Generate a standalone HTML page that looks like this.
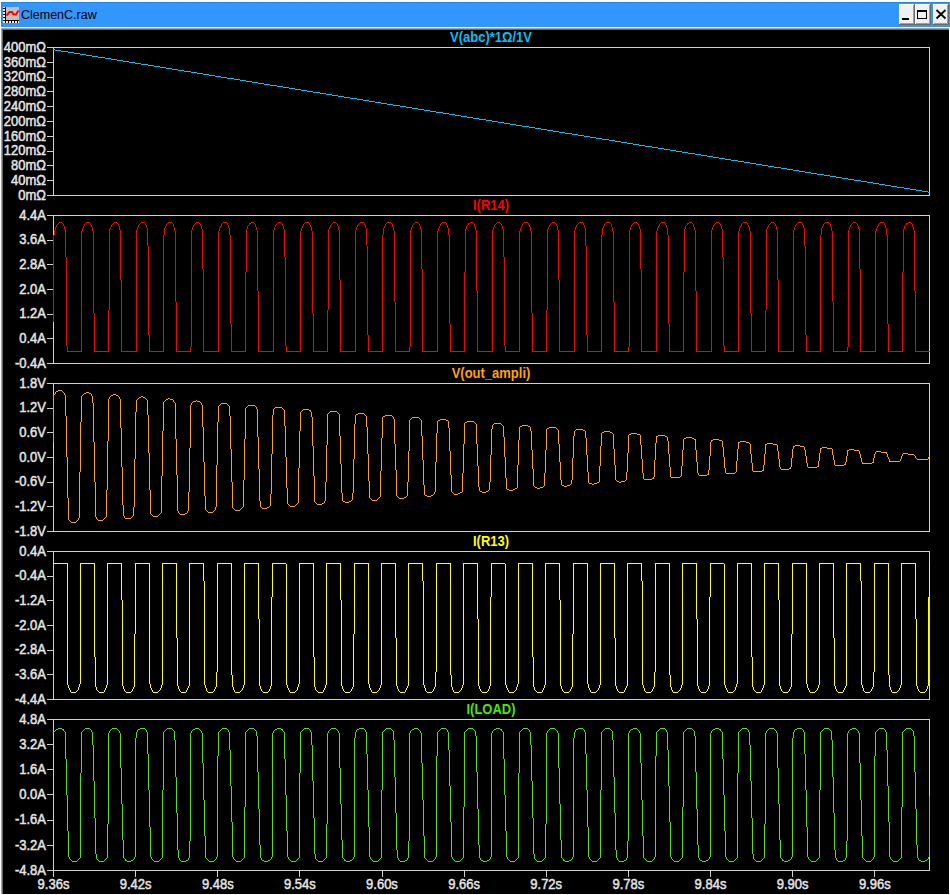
<!DOCTYPE html>
<html><head><meta charset="utf-8"><title>ClemenC.raw</title>
<style>
html,body{margin:0;padding:0;background:#fff;width:950px;height:895px;overflow:hidden;}
.lb{font-family:"Liberation Sans",sans-serif;font-weight:normal;font-size:13px;fill:#e4e4e4;stroke:#e4e4e4;stroke-width:0.45px;}
.tt{font-family:"Liberation Sans",sans-serif;font-weight:bold;font-size:13px;}
</style></head><body>
<svg width="950" height="895" viewBox="0 0 950 895" style="position:absolute;left:0;top:0"><rect x="0" y="0" width="950" height="895" fill="#ffffff"/><rect x="1" y="2" width="949" height="25" fill="#3396fa"/><rect x="1" y="2" width="949" height="1" fill="#1f88f0"/><rect x="1" y="2" width="1" height="25" fill="#1f88f0"/><rect x="1" y="28" width="948" height="866" fill="#a0a0a0"/><rect x="2" y="29" width="947" height="865" fill="#696969"/><rect x="3" y="30" width="946" height="864" fill="#000000"/><rect x="6" y="7" width="13" height="13" fill="#c0c0c0"/><rect x="3" y="7" width="3" height="16" fill="#000"/><rect x="3" y="20" width="16" height="3" fill="#000"/><rect x="3" y="7" width="2" height="1" fill="#f4ede4"/><rect x="3" y="9" width="2" height="2" fill="#f4ede4"/><rect x="3" y="12" width="2" height="2" fill="#f4ede4"/><rect x="3" y="15" width="2" height="2" fill="#f4ede4"/><rect x="3" y="18" width="2" height="2" fill="#f4ede4"/><rect x="3" y="21" width="2" height="2" fill="#f4ede4"/><rect x="6" y="21" width="2" height="2" fill="#f4ede4"/><rect x="9" y="21" width="2" height="2" fill="#f4ede4"/><rect x="12" y="21" width="2" height="2" fill="#f4ede4"/><rect x="15" y="21" width="2" height="2" fill="#f4ede4"/><rect x="18" y="21" width="1" height="2" fill="#f4ede4"/><path d="M6.5 15.5 L9.5 12 L12 12 L13.5 14.5 L16 14.5 L18.5 10.5" stroke="#ff0000" stroke-width="2" fill="none"/><text x="21" y="19" font-family="Liberation Sans" font-size="12.5" fill="#000">ClemenC.raw</text><rect x="899" y="4" width="16" height="21" fill="#696969"/><rect x="899" y="4" width="15" height="20" fill="#ffffff"/><rect x="900" y="5" width="14" height="19" fill="#a0a0a0"/><rect x="900" y="5" width="13" height="18" fill="#f0f0f0"/><rect x="915" y="4" width="16" height="21" fill="#696969"/><rect x="915" y="4" width="15" height="20" fill="#ffffff"/><rect x="916" y="5" width="14" height="19" fill="#a0a0a0"/><rect x="916" y="5" width="13" height="18" fill="#f0f0f0"/><rect x="933" y="4" width="16" height="21" fill="#696969"/><rect x="933" y="4" width="15" height="20" fill="#ffffff"/><rect x="934" y="5" width="14" height="19" fill="#a0a0a0"/><rect x="934" y="5" width="13" height="18" fill="#f0f0f0"/><rect x="902" y="18" width="7" height="2" fill="#000"/><rect x="917" y="10" width="10" height="9" fill="#000"/><rect x="918" y="12" width="8" height="6" fill="#f0f0f0"/><path d="M936.5 10 L945.5 18.5 M945.5 10 L936.5 18.5" stroke="#000" stroke-width="1.8" fill="none"/><rect x="53" y="47" width="877" height="1" fill="#d0d0d0"/><rect x="53" y="195" width="877" height="1" fill="#d0d0d0"/><rect x="53" y="47" width="1" height="149" fill="#d0d0d0"/><rect x="929" y="47" width="1" height="149" fill="#d0d0d0"/><rect x="47" y="47" width="6" height="1" fill="#d0d0d0"/><text x="46" y="47.09" transform="scale(1,1.1)" text-anchor="end" class="lb">400mΩ</text><rect x="47" y="62" width="6" height="1" fill="#d0d0d0"/><text x="46" y="60.55" transform="scale(1,1.1)" text-anchor="end" class="lb">360mΩ</text><rect x="47" y="77" width="6" height="1" fill="#d0d0d0"/><text x="46" y="74.00" transform="scale(1,1.1)" text-anchor="end" class="lb">320mΩ</text><rect x="47" y="91" width="6" height="1" fill="#d0d0d0"/><text x="46" y="87.45" transform="scale(1,1.1)" text-anchor="end" class="lb">280mΩ</text><rect x="47" y="106" width="6" height="1" fill="#d0d0d0"/><text x="46" y="100.91" transform="scale(1,1.1)" text-anchor="end" class="lb">240mΩ</text><rect x="47" y="121" width="6" height="1" fill="#d0d0d0"/><text x="46" y="114.36" transform="scale(1,1.1)" text-anchor="end" class="lb">200mΩ</text><rect x="47" y="136" width="6" height="1" fill="#d0d0d0"/><text x="46" y="127.82" transform="scale(1,1.1)" text-anchor="end" class="lb">160mΩ</text><rect x="47" y="151" width="6" height="1" fill="#d0d0d0"/><text x="46" y="141.27" transform="scale(1,1.1)" text-anchor="end" class="lb">120mΩ</text><rect x="47" y="165" width="6" height="1" fill="#d0d0d0"/><text x="46" y="154.73" transform="scale(1,1.1)" text-anchor="end" class="lb">80mΩ</text><rect x="47" y="180" width="6" height="1" fill="#d0d0d0"/><text x="46" y="168.18" transform="scale(1,1.1)" text-anchor="end" class="lb">40mΩ</text><rect x="47" y="195" width="6" height="1" fill="#d0d0d0"/><text x="46" y="181.64" transform="scale(1,1.1)" text-anchor="end" class="lb">0mΩ</text><text x="491" y="38.18" transform="scale(1,1.1)" text-anchor="middle" class="tt" style="fill:#00c0f8">V(abc)*1Ω/1V</text><rect x="53" y="215" width="877" height="1" fill="#d0d0d0"/><rect x="53" y="363" width="877" height="1" fill="#d0d0d0"/><rect x="53" y="215" width="1" height="149" fill="#d0d0d0"/><rect x="929" y="215" width="1" height="149" fill="#d0d0d0"/><rect x="47" y="215" width="6" height="1" fill="#d0d0d0"/><text x="46" y="199.82" transform="scale(1,1.1)" text-anchor="end" class="lb">4.4A</text><rect x="47" y="240" width="6" height="1" fill="#d0d0d0"/><text x="46" y="222.24" transform="scale(1,1.1)" text-anchor="end" class="lb">3.6A</text><rect x="47" y="264" width="6" height="1" fill="#d0d0d0"/><text x="46" y="244.67" transform="scale(1,1.1)" text-anchor="end" class="lb">2.8A</text><rect x="47" y="289" width="6" height="1" fill="#d0d0d0"/><text x="46" y="267.09" transform="scale(1,1.1)" text-anchor="end" class="lb">2.0A</text><rect x="47" y="314" width="6" height="1" fill="#d0d0d0"/><text x="46" y="289.52" transform="scale(1,1.1)" text-anchor="end" class="lb">1.2A</text><rect x="47" y="338" width="6" height="1" fill="#d0d0d0"/><text x="46" y="311.94" transform="scale(1,1.1)" text-anchor="end" class="lb">0.4A</text><rect x="47" y="363" width="6" height="1" fill="#d0d0d0"/><text x="46" y="334.36" transform="scale(1,1.1)" text-anchor="end" class="lb">-0.4A</text><text x="491" y="190.91" transform="scale(1,1.1)" text-anchor="middle" class="tt" style="fill:#ff0000">I(R14)</text><rect x="53" y="383" width="877" height="1" fill="#d0d0d0"/><rect x="53" y="531" width="877" height="1" fill="#d0d0d0"/><rect x="53" y="383" width="1" height="149" fill="#d0d0d0"/><rect x="929" y="383" width="1" height="149" fill="#d0d0d0"/><rect x="47" y="383" width="6" height="1" fill="#d0d0d0"/><text x="46" y="352.55" transform="scale(1,1.1)" text-anchor="end" class="lb">1.8V</text><rect x="47" y="408" width="6" height="1" fill="#d0d0d0"/><text x="46" y="374.97" transform="scale(1,1.1)" text-anchor="end" class="lb">1.2V</text><rect x="47" y="432" width="6" height="1" fill="#d0d0d0"/><text x="46" y="397.39" transform="scale(1,1.1)" text-anchor="end" class="lb">0.6V</text><rect x="47" y="457" width="6" height="1" fill="#d0d0d0"/><text x="46" y="419.82" transform="scale(1,1.1)" text-anchor="end" class="lb">0.0V</text><rect x="47" y="482" width="6" height="1" fill="#d0d0d0"/><text x="46" y="442.24" transform="scale(1,1.1)" text-anchor="end" class="lb">-0.6V</text><rect x="47" y="506" width="6" height="1" fill="#d0d0d0"/><text x="46" y="464.67" transform="scale(1,1.1)" text-anchor="end" class="lb">-1.2V</text><rect x="47" y="531" width="6" height="1" fill="#d0d0d0"/><text x="46" y="487.09" transform="scale(1,1.1)" text-anchor="end" class="lb">-1.8V</text><text x="491" y="343.64" transform="scale(1,1.1)" text-anchor="middle" class="tt" style="fill:#ffa500">V(out_ampli)</text><rect x="53" y="551" width="877" height="1" fill="#d0d0d0"/><rect x="53" y="699" width="877" height="1" fill="#d0d0d0"/><rect x="53" y="551" width="1" height="149" fill="#d0d0d0"/><rect x="929" y="551" width="1" height="149" fill="#d0d0d0"/><rect x="47" y="551" width="6" height="1" fill="#d0d0d0"/><text x="46" y="505.27" transform="scale(1,1.1)" text-anchor="end" class="lb">0.4A</text><rect x="47" y="576" width="6" height="1" fill="#d0d0d0"/><text x="46" y="527.70" transform="scale(1,1.1)" text-anchor="end" class="lb">-0.4A</text><rect x="47" y="600" width="6" height="1" fill="#d0d0d0"/><text x="46" y="550.12" transform="scale(1,1.1)" text-anchor="end" class="lb">-1.2A</text><rect x="47" y="625" width="6" height="1" fill="#d0d0d0"/><text x="46" y="572.55" transform="scale(1,1.1)" text-anchor="end" class="lb">-2.0A</text><rect x="47" y="650" width="6" height="1" fill="#d0d0d0"/><text x="46" y="594.97" transform="scale(1,1.1)" text-anchor="end" class="lb">-2.8A</text><rect x="47" y="674" width="6" height="1" fill="#d0d0d0"/><text x="46" y="617.39" transform="scale(1,1.1)" text-anchor="end" class="lb">-3.6A</text><rect x="47" y="699" width="6" height="1" fill="#d0d0d0"/><text x="46" y="639.82" transform="scale(1,1.1)" text-anchor="end" class="lb">-4.4A</text><text x="491" y="496.36" transform="scale(1,1.1)" text-anchor="middle" class="tt" style="fill:#ffff00">I(R13)</text><rect x="53" y="719" width="877" height="1" fill="#d0d0d0"/><rect x="53" y="870" width="877" height="1" fill="#d0d0d0"/><rect x="53" y="719" width="1" height="152" fill="#d0d0d0"/><rect x="929" y="719" width="1" height="152" fill="#d0d0d0"/><rect x="47" y="719" width="6" height="1" fill="#d0d0d0"/><text x="46" y="658.00" transform="scale(1,1.1)" text-anchor="end" class="lb">4.8A</text><rect x="47" y="744" width="6" height="1" fill="#d0d0d0"/><text x="46" y="680.88" transform="scale(1,1.1)" text-anchor="end" class="lb">3.2A</text><rect x="47" y="769" width="6" height="1" fill="#d0d0d0"/><text x="46" y="703.76" transform="scale(1,1.1)" text-anchor="end" class="lb">1.6A</text><rect x="47" y="794" width="6" height="1" fill="#d0d0d0"/><text x="46" y="726.64" transform="scale(1,1.1)" text-anchor="end" class="lb">0.0A</text><rect x="47" y="820" width="6" height="1" fill="#d0d0d0"/><text x="46" y="749.52" transform="scale(1,1.1)" text-anchor="end" class="lb">-1.6A</text><rect x="47" y="845" width="6" height="1" fill="#d0d0d0"/><text x="46" y="772.39" transform="scale(1,1.1)" text-anchor="end" class="lb">-3.2A</text><rect x="47" y="870" width="6" height="1" fill="#d0d0d0"/><text x="46" y="795.27" transform="scale(1,1.1)" text-anchor="end" class="lb">-4.8A</text><text x="491" y="649.09" transform="scale(1,1.1)" text-anchor="middle" class="tt" style="fill:#4ee600">I(LOAD)</text><rect x="53" y="871" width="1" height="6" fill="#d0d0d0"/><text x="53.5" y="808.18" transform="scale(1,1.1)" text-anchor="middle" class="lb">9.36s</text><rect x="135" y="871" width="1" height="6" fill="#d0d0d0"/><text x="135.6" y="808.18" transform="scale(1,1.1)" text-anchor="middle" class="lb">9.42s</text><rect x="217" y="871" width="1" height="6" fill="#d0d0d0"/><text x="217.8" y="808.18" transform="scale(1,1.1)" text-anchor="middle" class="lb">9.48s</text><rect x="299" y="871" width="1" height="6" fill="#d0d0d0"/><text x="299.9" y="808.18" transform="scale(1,1.1)" text-anchor="middle" class="lb">9.54s</text><rect x="382" y="871" width="1" height="6" fill="#d0d0d0"/><text x="382.0" y="808.18" transform="scale(1,1.1)" text-anchor="middle" class="lb">9.60s</text><rect x="464" y="871" width="1" height="6" fill="#d0d0d0"/><text x="464.1" y="808.18" transform="scale(1,1.1)" text-anchor="middle" class="lb">9.66s</text><rect x="546" y="871" width="1" height="6" fill="#d0d0d0"/><text x="546.2" y="808.18" transform="scale(1,1.1)" text-anchor="middle" class="lb">9.72s</text><rect x="628" y="871" width="1" height="6" fill="#d0d0d0"/><text x="628.4" y="808.18" transform="scale(1,1.1)" text-anchor="middle" class="lb">9.78s</text><rect x="710" y="871" width="1" height="6" fill="#d0d0d0"/><text x="710.5" y="808.18" transform="scale(1,1.1)" text-anchor="middle" class="lb">9.84s</text><rect x="792" y="871" width="1" height="6" fill="#d0d0d0"/><text x="792.6" y="808.18" transform="scale(1,1.1)" text-anchor="middle" class="lb">9.90s</text><rect x="874" y="871" width="1" height="6" fill="#d0d0d0"/><text x="874.8" y="808.18" transform="scale(1,1.1)" text-anchor="middle" class="lb">9.96s</text><path d="M53 49h1v1h-1zM54 49h1v1h-1zM55 50h1v1h-1zM56 50h1v1h-1zM57 50h1v1h-1zM58 50h1v1h-1zM59 50h1v1h-1zM60 50h1v1h-1zM61 51h1v1h-1zM62 51h1v1h-1zM63 51h1v1h-1zM64 51h1v1h-1zM65 51h1v1h-1zM66 51h1v1h-1zM67 51h1v1h-1zM68 52h1v1h-1zM69 52h1v1h-1zM70 52h1v1h-1zM71 52h1v1h-1zM72 52h1v1h-1zM73 52h1v1h-1zM74 53h1v1h-1zM75 53h1v1h-1zM76 53h1v1h-1zM77 53h1v1h-1zM78 53h1v1h-1zM79 53h1v1h-1zM80 54h1v1h-1zM81 54h1v1h-1zM82 54h1v1h-1zM83 54h1v1h-1zM84 54h1v1h-1zM85 54h1v1h-1zM86 55h1v1h-1zM87 55h1v1h-1zM88 55h1v1h-1zM89 55h1v1h-1zM90 55h1v1h-1zM91 55h1v1h-1zM92 56h1v1h-1zM93 56h1v1h-1zM94 56h1v1h-1zM95 56h1v1h-1zM96 56h1v1h-1zM97 56h1v1h-1zM98 57h1v1h-1zM99 57h1v1h-1zM100 57h1v1h-1zM101 57h1v1h-1zM102 57h1v1h-1zM103 57h1v1h-1zM104 57h1v1h-1zM105 58h1v1h-1zM106 58h1v1h-1zM107 58h1v1h-1zM108 58h1v1h-1zM109 58h1v1h-1zM110 58h1v1h-1zM111 59h1v1h-1zM112 59h1v1h-1zM113 59h1v1h-1zM114 59h1v1h-1zM115 59h1v1h-1zM116 59h1v1h-1zM117 60h1v1h-1zM118 60h1v1h-1zM119 60h1v1h-1zM120 60h1v1h-1zM121 60h1v1h-1zM122 60h1v1h-1zM123 61h1v1h-1zM124 61h1v1h-1zM125 61h1v1h-1zM126 61h1v1h-1zM127 61h1v1h-1zM128 61h1v1h-1zM129 62h1v1h-1zM130 62h1v1h-1zM131 62h1v1h-1zM132 62h1v1h-1zM133 62h1v1h-1zM134 62h1v1h-1zM135 63h1v1h-1zM136 63h1v1h-1zM137 63h1v1h-1zM138 63h1v1h-1zM139 63h1v1h-1zM140 63h1v1h-1zM141 64h1v1h-1zM142 64h1v1h-1zM143 64h1v1h-1zM144 64h1v1h-1zM145 64h1v1h-1zM146 64h1v1h-1zM147 64h1v1h-1zM148 65h1v1h-1zM149 65h1v1h-1zM150 65h1v1h-1zM151 65h1v1h-1zM152 65h1v1h-1zM153 65h1v1h-1zM154 66h1v1h-1zM155 66h1v1h-1zM156 66h1v1h-1zM157 66h1v1h-1zM158 66h1v1h-1zM159 66h1v1h-1zM160 67h1v1h-1zM161 67h1v1h-1zM162 67h1v1h-1zM163 67h1v1h-1zM164 67h1v1h-1zM165 67h1v1h-1zM166 68h1v1h-1zM167 68h1v1h-1zM168 68h1v1h-1zM169 68h1v1h-1zM170 68h1v1h-1zM171 68h1v1h-1zM172 69h1v1h-1zM173 69h1v1h-1zM174 69h1v1h-1zM175 69h1v1h-1zM176 69h1v1h-1zM177 69h1v1h-1zM178 70h1v1h-1zM179 70h1v1h-1zM180 70h1v1h-1zM181 70h1v1h-1zM182 70h1v1h-1zM183 70h1v1h-1zM184 71h1v1h-1zM185 71h1v1h-1zM186 71h1v1h-1zM187 71h1v1h-1zM188 71h1v1h-1zM189 71h1v1h-1zM190 71h1v1h-1zM191 72h1v1h-1zM192 72h1v1h-1zM193 72h1v1h-1zM194 72h1v1h-1zM195 72h1v1h-1zM196 72h1v1h-1zM197 73h1v1h-1zM198 73h1v1h-1zM199 73h1v1h-1zM200 73h1v1h-1zM201 73h1v1h-1zM202 73h1v1h-1zM203 74h1v1h-1zM204 74h1v1h-1zM205 74h1v1h-1zM206 74h1v1h-1zM207 74h1v1h-1zM208 74h1v1h-1zM209 75h1v1h-1zM210 75h1v1h-1zM211 75h1v1h-1zM212 75h1v1h-1zM213 75h1v1h-1zM214 75h1v1h-1zM215 76h1v1h-1zM216 76h1v1h-1zM217 76h1v1h-1zM218 76h1v1h-1zM219 76h1v1h-1zM220 76h1v1h-1zM221 77h1v1h-1zM222 77h1v1h-1zM223 77h1v1h-1zM224 77h1v1h-1zM225 77h1v1h-1zM226 77h1v1h-1zM227 78h1v1h-1zM228 78h1v1h-1zM229 78h1v1h-1zM230 78h1v1h-1zM231 78h1v1h-1zM232 78h1v1h-1zM233 78h1v1h-1zM234 79h1v1h-1zM235 79h1v1h-1zM236 79h1v1h-1zM237 79h1v1h-1zM238 79h1v1h-1zM239 79h1v1h-1zM240 80h1v1h-1zM241 80h1v1h-1zM242 80h1v1h-1zM243 80h1v1h-1zM244 80h1v1h-1zM245 80h1v1h-1zM246 81h1v1h-1zM247 81h1v1h-1zM248 81h1v1h-1zM249 81h1v1h-1zM250 81h1v1h-1zM251 81h1v1h-1zM252 82h1v1h-1zM253 82h1v1h-1zM254 82h1v1h-1zM255 82h1v1h-1zM256 82h1v1h-1zM257 82h1v1h-1zM258 83h1v1h-1zM259 83h1v1h-1zM260 83h1v1h-1zM261 83h1v1h-1zM262 83h1v1h-1zM263 83h1v1h-1zM264 84h1v1h-1zM265 84h1v1h-1zM266 84h1v1h-1zM267 84h1v1h-1zM268 84h1v1h-1zM269 84h1v1h-1zM270 85h1v1h-1zM271 85h1v1h-1zM272 85h1v1h-1zM273 85h1v1h-1zM274 85h1v1h-1zM275 85h1v1h-1zM276 85h1v1h-1zM277 86h1v1h-1zM278 86h1v1h-1zM279 86h1v1h-1zM280 86h1v1h-1zM281 86h1v1h-1zM282 86h1v1h-1zM283 87h1v1h-1zM284 87h1v1h-1zM285 87h1v1h-1zM286 87h1v1h-1zM287 87h1v1h-1zM288 87h1v1h-1zM289 88h1v1h-1zM290 88h1v1h-1zM291 88h1v1h-1zM292 88h1v1h-1zM293 88h1v1h-1zM294 88h1v1h-1zM295 89h1v1h-1zM296 89h1v1h-1zM297 89h1v1h-1zM298 89h1v1h-1zM299 89h1v1h-1zM300 89h1v1h-1zM301 90h1v1h-1zM302 90h1v1h-1zM303 90h1v1h-1zM304 90h1v1h-1zM305 90h1v1h-1zM306 90h1v1h-1zM307 91h1v1h-1zM308 91h1v1h-1zM309 91h1v1h-1zM310 91h1v1h-1zM311 91h1v1h-1zM312 91h1v1h-1zM313 92h1v1h-1zM314 92h1v1h-1zM315 92h1v1h-1zM316 92h1v1h-1zM317 92h1v1h-1zM318 92h1v1h-1zM319 92h1v1h-1zM320 93h1v1h-1zM321 93h1v1h-1zM322 93h1v1h-1zM323 93h1v1h-1zM324 93h1v1h-1zM325 93h1v1h-1zM326 94h1v1h-1zM327 94h1v1h-1zM328 94h1v1h-1zM329 94h1v1h-1zM330 94h1v1h-1zM331 94h1v1h-1zM332 95h1v1h-1zM333 95h1v1h-1zM334 95h1v1h-1zM335 95h1v1h-1zM336 95h1v1h-1zM337 95h1v1h-1zM338 96h1v1h-1zM339 96h1v1h-1zM340 96h1v1h-1zM341 96h1v1h-1zM342 96h1v1h-1zM343 96h1v1h-1zM344 97h1v1h-1zM345 97h1v1h-1zM346 97h1v1h-1zM347 97h1v1h-1zM348 97h1v1h-1zM349 97h1v1h-1zM350 98h1v1h-1zM351 98h1v1h-1zM352 98h1v1h-1zM353 98h1v1h-1zM354 98h1v1h-1zM355 98h1v1h-1zM356 98h1v1h-1zM357 99h1v1h-1zM358 99h1v1h-1zM359 99h1v1h-1zM360 99h1v1h-1zM361 99h1v1h-1zM362 99h1v1h-1zM363 100h1v1h-1zM364 100h1v1h-1zM365 100h1v1h-1zM366 100h1v1h-1zM367 100h1v1h-1zM368 100h1v1h-1zM369 101h1v1h-1zM370 101h1v1h-1zM371 101h1v1h-1zM372 101h1v1h-1zM373 101h1v1h-1zM374 101h1v1h-1zM375 102h1v1h-1zM376 102h1v1h-1zM377 102h1v1h-1zM378 102h1v1h-1zM379 102h1v1h-1zM380 102h1v1h-1zM381 103h1v1h-1zM382 103h1v1h-1zM383 103h1v1h-1zM384 103h1v1h-1zM385 103h1v1h-1zM386 103h1v1h-1zM387 104h1v1h-1zM388 104h1v1h-1zM389 104h1v1h-1zM390 104h1v1h-1zM391 104h1v1h-1zM392 104h1v1h-1zM393 105h1v1h-1zM394 105h1v1h-1zM395 105h1v1h-1zM396 105h1v1h-1zM397 105h1v1h-1zM398 105h1v1h-1zM399 105h1v1h-1zM400 106h1v1h-1zM401 106h1v1h-1zM402 106h1v1h-1zM403 106h1v1h-1zM404 106h1v1h-1zM405 106h1v1h-1zM406 107h1v1h-1zM407 107h1v1h-1zM408 107h1v1h-1zM409 107h1v1h-1zM410 107h1v1h-1zM411 107h1v1h-1zM412 108h1v1h-1zM413 108h1v1h-1zM414 108h1v1h-1zM415 108h1v1h-1zM416 108h1v1h-1zM417 108h1v1h-1zM418 109h1v1h-1zM419 109h1v1h-1zM420 109h1v1h-1zM421 109h1v1h-1zM422 109h1v1h-1zM423 109h1v1h-1zM424 110h1v1h-1zM425 110h1v1h-1zM426 110h1v1h-1zM427 110h1v1h-1zM428 110h1v1h-1zM429 110h1v1h-1zM430 111h1v1h-1zM431 111h1v1h-1zM432 111h1v1h-1zM433 111h1v1h-1zM434 111h1v1h-1zM435 111h1v1h-1zM436 112h1v1h-1zM437 112h1v1h-1zM438 112h1v1h-1zM439 112h1v1h-1zM440 112h1v1h-1zM441 112h1v1h-1zM442 112h1v1h-1zM443 113h1v1h-1zM444 113h1v1h-1zM445 113h1v1h-1zM446 113h1v1h-1zM447 113h1v1h-1zM448 113h1v1h-1zM449 114h1v1h-1zM450 114h1v1h-1zM451 114h1v1h-1zM452 114h1v1h-1zM453 114h1v1h-1zM454 114h1v1h-1zM455 115h1v1h-1zM456 115h1v1h-1zM457 115h1v1h-1zM458 115h1v1h-1zM459 115h1v1h-1zM460 115h1v1h-1zM461 116h1v1h-1zM462 116h1v1h-1zM463 116h1v1h-1zM464 116h1v1h-1zM465 116h1v1h-1zM466 116h1v1h-1zM467 117h1v1h-1zM468 117h1v1h-1zM469 117h1v1h-1zM470 117h1v1h-1zM471 117h1v1h-1zM472 117h1v1h-1zM473 118h1v1h-1zM474 118h1v1h-1zM475 118h1v1h-1zM476 118h1v1h-1zM477 118h1v1h-1zM478 118h1v1h-1zM479 119h1v1h-1zM480 119h1v1h-1zM481 119h1v1h-1zM482 119h1v1h-1zM483 119h1v1h-1zM484 119h1v1h-1zM485 119h1v1h-1zM486 120h1v1h-1zM487 120h1v1h-1zM488 120h1v1h-1zM489 120h1v1h-1zM490 120h1v1h-1zM491 120h1v1h-1zM492 121h1v1h-1zM493 121h1v1h-1zM494 121h1v1h-1zM495 121h1v1h-1zM496 121h1v1h-1zM497 121h1v1h-1zM498 122h1v1h-1zM499 122h1v1h-1zM500 122h1v1h-1zM501 122h1v1h-1zM502 122h1v1h-1zM503 122h1v1h-1zM504 123h1v1h-1zM505 123h1v1h-1zM506 123h1v1h-1zM507 123h1v1h-1zM508 123h1v1h-1zM509 123h1v1h-1zM510 124h1v1h-1zM511 124h1v1h-1zM512 124h1v1h-1zM513 124h1v1h-1zM514 124h1v1h-1zM515 124h1v1h-1zM516 125h1v1h-1zM517 125h1v1h-1zM518 125h1v1h-1zM519 125h1v1h-1zM520 125h1v1h-1zM521 125h1v1h-1zM522 126h1v1h-1zM523 126h1v1h-1zM524 126h1v1h-1zM525 126h1v1h-1zM526 126h1v1h-1zM527 126h1v1h-1zM528 126h1v1h-1zM529 127h1v1h-1zM530 127h1v1h-1zM531 127h1v1h-1zM532 127h1v1h-1zM533 127h1v1h-1zM534 127h1v1h-1zM535 128h1v1h-1zM536 128h1v1h-1zM537 128h1v1h-1zM538 128h1v1h-1zM539 128h1v1h-1zM540 128h1v1h-1zM541 129h1v1h-1zM542 129h1v1h-1zM543 129h1v1h-1zM544 129h1v1h-1zM545 129h1v1h-1zM546 129h1v1h-1zM547 130h1v1h-1zM548 130h1v1h-1zM549 130h1v1h-1zM550 130h1v1h-1zM551 130h1v1h-1zM552 130h1v1h-1zM553 131h1v1h-1zM554 131h1v1h-1zM555 131h1v1h-1zM556 131h1v1h-1zM557 131h1v1h-1zM558 131h1v1h-1zM559 132h1v1h-1zM560 132h1v1h-1zM561 132h1v1h-1zM562 132h1v1h-1zM563 132h1v1h-1zM564 132h1v1h-1zM565 133h1v1h-1zM566 133h1v1h-1zM567 133h1v1h-1zM568 133h1v1h-1zM569 133h1v1h-1zM570 133h1v1h-1zM571 133h1v1h-1zM572 134h1v1h-1zM573 134h1v1h-1zM574 134h1v1h-1zM575 134h1v1h-1zM576 134h1v1h-1zM577 134h1v1h-1zM578 135h1v1h-1zM579 135h1v1h-1zM580 135h1v1h-1zM581 135h1v1h-1zM582 135h1v1h-1zM583 135h1v1h-1zM584 136h1v1h-1zM585 136h1v1h-1zM586 136h1v1h-1zM587 136h1v1h-1zM588 136h1v1h-1zM589 136h1v1h-1zM590 137h1v1h-1zM591 137h1v1h-1zM592 137h1v1h-1zM593 137h1v1h-1zM594 137h1v1h-1zM595 137h1v1h-1zM596 138h1v1h-1zM597 138h1v1h-1zM598 138h1v1h-1zM599 138h1v1h-1zM600 138h1v1h-1zM601 138h1v1h-1zM602 139h1v1h-1zM603 139h1v1h-1zM604 139h1v1h-1zM605 139h1v1h-1zM606 139h1v1h-1zM607 139h1v1h-1zM608 139h1v1h-1zM609 140h1v1h-1zM610 140h1v1h-1zM611 140h1v1h-1zM612 140h1v1h-1zM613 140h1v1h-1zM614 140h1v1h-1zM615 141h1v1h-1zM616 141h1v1h-1zM617 141h1v1h-1zM618 141h1v1h-1zM619 141h1v1h-1zM620 141h1v1h-1zM621 142h1v1h-1zM622 142h1v1h-1zM623 142h1v1h-1zM624 142h1v1h-1zM625 142h1v1h-1zM626 142h1v1h-1zM627 143h1v1h-1zM628 143h1v1h-1zM629 143h1v1h-1zM630 143h1v1h-1zM631 143h1v1h-1zM632 143h1v1h-1zM633 144h1v1h-1zM634 144h1v1h-1zM635 144h1v1h-1zM636 144h1v1h-1zM637 144h1v1h-1zM638 144h1v1h-1zM639 145h1v1h-1zM640 145h1v1h-1zM641 145h1v1h-1zM642 145h1v1h-1zM643 145h1v1h-1zM644 145h1v1h-1zM645 146h1v1h-1zM646 146h1v1h-1zM647 146h1v1h-1zM648 146h1v1h-1zM649 146h1v1h-1zM650 146h1v1h-1zM651 146h1v1h-1zM652 147h1v1h-1zM653 147h1v1h-1zM654 147h1v1h-1zM655 147h1v1h-1zM656 147h1v1h-1zM657 147h1v1h-1zM658 148h1v1h-1zM659 148h1v1h-1zM660 148h1v1h-1zM661 148h1v1h-1zM662 148h1v1h-1zM663 148h1v1h-1zM664 149h1v1h-1zM665 149h1v1h-1zM666 149h1v1h-1zM667 149h1v1h-1zM668 149h1v1h-1zM669 149h1v1h-1zM670 150h1v1h-1zM671 150h1v1h-1zM672 150h1v1h-1zM673 150h1v1h-1zM674 150h1v1h-1zM675 150h1v1h-1zM676 151h1v1h-1zM677 151h1v1h-1zM678 151h1v1h-1zM679 151h1v1h-1zM680 151h1v1h-1zM681 151h1v1h-1zM682 152h1v1h-1zM683 152h1v1h-1zM684 152h1v1h-1zM685 152h1v1h-1zM686 152h1v1h-1zM687 152h1v1h-1zM688 153h1v1h-1zM689 153h1v1h-1zM690 153h1v1h-1zM691 153h1v1h-1zM692 153h1v1h-1zM693 153h1v1h-1zM694 153h1v1h-1zM695 154h1v1h-1zM696 154h1v1h-1zM697 154h1v1h-1zM698 154h1v1h-1zM699 154h1v1h-1zM700 154h1v1h-1zM701 155h1v1h-1zM702 155h1v1h-1zM703 155h1v1h-1zM704 155h1v1h-1zM705 155h1v1h-1zM706 155h1v1h-1zM707 156h1v1h-1zM708 156h1v1h-1zM709 156h1v1h-1zM710 156h1v1h-1zM711 156h1v1h-1zM712 156h1v1h-1zM713 157h1v1h-1zM714 157h1v1h-1zM715 157h1v1h-1zM716 157h1v1h-1zM717 157h1v1h-1zM718 157h1v1h-1zM719 158h1v1h-1zM720 158h1v1h-1zM721 158h1v1h-1zM722 158h1v1h-1zM723 158h1v1h-1zM724 158h1v1h-1zM725 159h1v1h-1zM726 159h1v1h-1zM727 159h1v1h-1zM728 159h1v1h-1zM729 159h1v1h-1zM730 159h1v1h-1zM731 160h1v1h-1zM732 160h1v1h-1zM733 160h1v1h-1zM734 160h1v1h-1zM735 160h1v1h-1zM736 160h1v1h-1zM737 160h1v1h-1zM738 161h1v1h-1zM739 161h1v1h-1zM740 161h1v1h-1zM741 161h1v1h-1zM742 161h1v1h-1zM743 161h1v1h-1zM744 162h1v1h-1zM745 162h1v1h-1zM746 162h1v1h-1zM747 162h1v1h-1zM748 162h1v1h-1zM749 162h1v1h-1zM750 163h1v1h-1zM751 163h1v1h-1zM752 163h1v1h-1zM753 163h1v1h-1zM754 163h1v1h-1zM755 163h1v1h-1zM756 164h1v1h-1zM757 164h1v1h-1zM758 164h1v1h-1zM759 164h1v1h-1zM760 164h1v1h-1zM761 164h1v1h-1zM762 165h1v1h-1zM763 165h1v1h-1zM764 165h1v1h-1zM765 165h1v1h-1zM766 165h1v1h-1zM767 165h1v1h-1zM768 166h1v1h-1zM769 166h1v1h-1zM770 166h1v1h-1zM771 166h1v1h-1zM772 166h1v1h-1zM773 166h1v1h-1zM774 167h1v1h-1zM775 167h1v1h-1zM776 167h1v1h-1zM777 167h1v1h-1zM778 167h1v1h-1zM779 167h1v1h-1zM780 167h1v1h-1zM781 168h1v1h-1zM782 168h1v1h-1zM783 168h1v1h-1zM784 168h1v1h-1zM785 168h1v1h-1zM786 168h1v1h-1zM787 169h1v1h-1zM788 169h1v1h-1zM789 169h1v1h-1zM790 169h1v1h-1zM791 169h1v1h-1zM792 169h1v1h-1zM793 170h1v1h-1zM794 170h1v1h-1zM795 170h1v1h-1zM796 170h1v1h-1zM797 170h1v1h-1zM798 170h1v1h-1zM799 171h1v1h-1zM800 171h1v1h-1zM801 171h1v1h-1zM802 171h1v1h-1zM803 171h1v1h-1zM804 171h1v1h-1zM805 172h1v1h-1zM806 172h1v1h-1zM807 172h1v1h-1zM808 172h1v1h-1zM809 172h1v1h-1zM810 172h1v1h-1zM811 173h1v1h-1zM812 173h1v1h-1zM813 173h1v1h-1zM814 173h1v1h-1zM815 173h1v1h-1zM816 173h1v1h-1zM817 174h1v1h-1zM818 174h1v1h-1zM819 174h1v1h-1zM820 174h1v1h-1zM821 174h1v1h-1zM822 174h1v1h-1zM823 174h1v1h-1zM824 175h1v1h-1zM825 175h1v1h-1zM826 175h1v1h-1zM827 175h1v1h-1zM828 175h1v1h-1zM829 175h1v1h-1zM830 176h1v1h-1zM831 176h1v1h-1zM832 176h1v1h-1zM833 176h1v1h-1zM834 176h1v1h-1zM835 176h1v1h-1zM836 177h1v1h-1zM837 177h1v1h-1zM838 177h1v1h-1zM839 177h1v1h-1zM840 177h1v1h-1zM841 177h1v1h-1zM842 178h1v1h-1zM843 178h1v1h-1zM844 178h1v1h-1zM845 178h1v1h-1zM846 178h1v1h-1zM847 178h1v1h-1zM848 179h1v1h-1zM849 179h1v1h-1zM850 179h1v1h-1zM851 179h1v1h-1zM852 179h1v1h-1zM853 179h1v1h-1zM854 180h1v1h-1zM855 180h1v1h-1zM856 180h1v1h-1zM857 180h1v1h-1zM858 180h1v1h-1zM859 180h1v1h-1zM860 180h1v1h-1zM861 181h1v1h-1zM862 181h1v1h-1zM863 181h1v1h-1zM864 181h1v1h-1zM865 181h1v1h-1zM866 181h1v1h-1zM867 182h1v1h-1zM868 182h1v1h-1zM869 182h1v1h-1zM870 182h1v1h-1zM871 182h1v1h-1zM872 182h1v1h-1zM873 183h1v1h-1zM874 183h1v1h-1zM875 183h1v1h-1zM876 183h1v1h-1zM877 183h1v1h-1zM878 183h1v1h-1zM879 184h1v1h-1zM880 184h1v1h-1zM881 184h1v1h-1zM882 184h1v1h-1zM883 184h1v1h-1zM884 184h1v1h-1zM885 185h1v1h-1zM886 185h1v1h-1zM887 185h1v1h-1zM888 185h1v1h-1zM889 185h1v1h-1zM890 185h1v1h-1zM891 186h1v1h-1zM892 186h1v1h-1zM893 186h1v1h-1zM894 186h1v1h-1zM895 186h1v1h-1zM896 186h1v1h-1zM897 187h1v1h-1zM898 187h1v1h-1zM899 187h1v1h-1zM900 187h1v1h-1zM901 187h1v1h-1zM902 187h1v1h-1zM903 187h1v1h-1zM904 188h1v1h-1zM905 188h1v1h-1zM906 188h1v1h-1zM907 188h1v1h-1zM908 188h1v1h-1zM909 188h1v1h-1zM910 189h1v1h-1zM911 189h1v1h-1zM912 189h1v1h-1zM913 189h1v1h-1zM914 189h1v1h-1zM915 189h1v1h-1zM916 190h1v1h-1zM917 190h1v1h-1zM918 190h1v1h-1zM919 190h1v1h-1zM920 190h1v1h-1zM921 190h1v1h-1zM922 191h1v1h-1zM923 191h1v1h-1zM924 191h1v1h-1zM925 191h1v1h-1zM926 191h1v1h-1zM927 191h1v1h-1zM928 192h1v1h-1zM929 192h1v1h-1z" fill="#00c0f8"/><path d="M53 235h1v87h-1zM54 230h1v5h-1zM55 227h1v3h-1zM56 225h1v2h-1zM57 224h1v1h-1zM58 223h1v1h-1zM59 222h1v1h-1zM60 222h1v1h-1zM61 222h1v1h-1zM62 223h1v1h-1zM63 224h1v2h-1zM64 226h1v3h-1zM65 229h1v28h-1zM66 257h1v89h-1zM67 346h1v6h-1zM68 351h1v1h-1zM69 351h1v1h-1zM70 351h1v1h-1zM71 351h1v1h-1zM72 351h1v1h-1zM73 351h1v1h-1zM74 351h1v1h-1zM75 351h1v1h-1zM76 351h1v1h-1zM77 351h1v1h-1zM78 351h1v1h-1zM79 351h1v1h-1zM80 351h1v1h-1zM81 231h1v121h-1zM82 228h1v3h-1zM83 226h1v2h-1zM84 224h1v2h-1zM85 223h1v1h-1zM86 222h1v1h-1zM87 222h1v1h-1zM88 222h1v1h-1zM89 222h1v1h-1zM90 223h1v2h-1zM91 225h1v2h-1zM92 227h1v4h-1zM93 231h1v82h-1zM94 313h1v39h-1zM95 351h1v1h-1zM96 351h1v1h-1zM97 351h1v1h-1zM98 351h1v1h-1zM99 351h1v1h-1zM100 351h1v1h-1zM101 351h1v1h-1zM102 351h1v1h-1zM103 351h1v1h-1zM104 351h1v1h-1zM105 351h1v1h-1zM106 351h1v1h-1zM107 351h1v1h-1zM108 310h1v42h-1zM109 229h1v81h-1zM110 227h1v2h-1zM111 225h1v2h-1zM112 224h1v1h-1zM113 223h1v1h-1zM114 222h1v1h-1zM115 222h1v1h-1zM116 222h1v1h-1zM117 223h1v1h-1zM118 224h1v2h-1zM119 226h1v4h-1zM120 230h1v50h-1zM121 280h1v72h-1zM122 351h1v1h-1zM123 351h1v1h-1zM124 351h1v1h-1zM125 351h1v1h-1zM126 351h1v1h-1zM127 351h1v1h-1zM128 351h1v1h-1zM129 351h1v1h-1zM130 351h1v1h-1zM131 351h1v1h-1zM132 351h1v1h-1zM133 351h1v1h-1zM134 351h1v1h-1zM135 351h1v1h-1zM136 230h1v122h-1zM137 227h1v3h-1zM138 225h1v2h-1zM139 224h1v1h-1zM140 223h1v1h-1zM141 222h1v1h-1zM142 222h1v1h-1zM143 222h1v1h-1zM144 222h1v1h-1zM145 223h1v2h-1zM146 225h1v3h-1zM147 228h1v18h-1zM148 246h1v89h-1zM149 335h1v17h-1zM150 351h1v1h-1zM151 351h1v1h-1zM152 351h1v1h-1zM153 351h1v1h-1zM154 351h1v1h-1zM155 351h1v1h-1zM156 351h1v1h-1zM157 351h1v1h-1zM158 351h1v1h-1zM159 351h1v1h-1zM160 351h1v1h-1zM161 351h1v1h-1zM162 351h1v1h-1zM163 235h1v117h-1zM164 228h1v7h-1zM165 226h1v2h-1zM166 224h1v2h-1zM167 223h1v1h-1zM168 222h1v1h-1zM169 222h1v1h-1zM170 222h1v1h-1zM171 222h1v1h-1zM172 223h1v1h-1zM173 224h1v3h-1zM174 227h1v4h-1zM175 231h1v71h-1zM176 302h1v50h-1zM177 351h1v1h-1zM178 351h1v1h-1zM179 351h1v1h-1zM180 351h1v1h-1zM181 351h1v1h-1zM182 351h1v1h-1zM183 351h1v1h-1zM184 351h1v1h-1zM185 351h1v1h-1zM186 351h1v1h-1zM187 351h1v1h-1zM188 351h1v1h-1zM189 351h1v1h-1zM190 347h1v5h-1zM191 230h1v117h-1zM192 227h1v3h-1zM193 225h1v2h-1zM194 224h1v1h-1zM195 223h1v1h-1zM196 222h1v1h-1zM197 222h1v1h-1zM198 222h1v1h-1zM199 223h1v1h-1zM200 224h1v2h-1zM201 226h1v3h-1zM202 229h1v40h-1zM203 269h1v83h-1zM204 351h1v1h-1zM205 351h1v1h-1zM206 351h1v1h-1zM207 351h1v1h-1zM208 351h1v1h-1zM209 351h1v1h-1zM210 351h1v1h-1zM211 351h1v1h-1zM212 351h1v1h-1zM213 351h1v1h-1zM214 351h1v1h-1zM215 351h1v1h-1zM216 351h1v1h-1zM217 351h1v1h-1zM218 231h1v121h-1zM219 228h1v3h-1zM220 226h1v2h-1zM221 224h1v2h-1zM222 223h1v1h-1zM223 222h1v1h-1zM224 222h1v1h-1zM225 222h1v1h-1zM226 222h1v1h-1zM227 223h1v2h-1zM228 225h1v3h-1zM229 228h1v7h-1zM230 235h1v89h-1zM231 324h1v28h-1zM232 351h1v1h-1zM233 351h1v1h-1zM234 351h1v1h-1zM235 351h1v1h-1zM236 351h1v1h-1zM237 351h1v1h-1zM238 351h1v1h-1zM239 351h1v1h-1zM240 351h1v1h-1zM241 351h1v1h-1zM242 351h1v1h-1zM243 351h1v1h-1zM244 351h1v1h-1zM245 272h1v80h-1zM246 229h1v43h-1zM247 226h1v3h-1zM248 225h1v1h-1zM249 223h1v2h-1zM250 223h1v1h-1zM251 222h1v1h-1zM252 222h1v1h-1zM253 222h1v1h-1zM254 223h1v1h-1zM255 224h1v3h-1zM256 227h1v3h-1zM257 230h1v61h-1zM258 291h1v61h-1zM259 351h1v1h-1zM260 351h1v1h-1zM261 351h1v1h-1zM262 351h1v1h-1zM263 351h1v1h-1zM264 351h1v1h-1zM265 351h1v1h-1zM266 351h1v1h-1zM267 351h1v1h-1zM268 351h1v1h-1zM269 351h1v1h-1zM270 351h1v1h-1zM271 351h1v1h-1zM272 351h1v1h-1zM273 230h1v122h-1zM274 227h1v3h-1zM275 225h1v2h-1zM276 224h1v1h-1zM277 223h1v1h-1zM278 222h1v1h-1zM279 222h1v1h-1zM280 222h1v1h-1zM281 223h1v1h-1zM282 224h1v2h-1zM283 226h1v3h-1zM284 229h1v28h-1zM285 257h1v89h-1zM286 346h1v6h-1zM287 351h1v1h-1zM288 351h1v1h-1zM289 351h1v1h-1zM290 351h1v1h-1zM291 351h1v1h-1zM292 351h1v1h-1zM293 351h1v1h-1zM294 351h1v1h-1zM295 351h1v1h-1zM296 351h1v1h-1zM297 351h1v1h-1zM298 351h1v1h-1zM299 351h1v1h-1zM300 231h1v121h-1zM301 228h1v3h-1zM302 226h1v2h-1zM303 224h1v2h-1zM304 223h1v1h-1zM305 222h1v1h-1zM306 222h1v1h-1zM307 222h1v1h-1zM308 222h1v1h-1zM309 223h1v2h-1zM310 225h1v2h-1zM311 227h1v4h-1zM312 231h1v82h-1zM313 313h1v39h-1zM314 351h1v1h-1zM315 351h1v1h-1zM316 351h1v1h-1zM317 351h1v1h-1zM318 351h1v1h-1zM319 351h1v1h-1zM320 351h1v1h-1zM321 351h1v1h-1zM322 351h1v1h-1zM323 351h1v1h-1zM324 351h1v1h-1zM325 351h1v1h-1zM326 351h1v1h-1zM327 310h1v42h-1zM328 229h1v81h-1zM329 227h1v2h-1zM330 225h1v2h-1zM331 224h1v1h-1zM332 223h1v1h-1zM333 222h1v1h-1zM334 222h1v1h-1zM335 222h1v1h-1zM336 223h1v1h-1zM337 224h1v2h-1zM338 226h1v4h-1zM339 230h1v50h-1zM340 280h1v72h-1zM341 351h1v1h-1zM342 351h1v1h-1zM343 351h1v1h-1zM344 351h1v1h-1zM345 351h1v1h-1zM346 351h1v1h-1zM347 351h1v1h-1zM348 351h1v1h-1zM349 351h1v1h-1zM350 351h1v1h-1zM351 351h1v1h-1zM352 351h1v1h-1zM353 351h1v1h-1zM354 351h1v1h-1zM355 230h1v122h-1zM356 227h1v3h-1zM357 225h1v2h-1zM358 224h1v1h-1zM359 223h1v1h-1zM360 222h1v1h-1zM361 222h1v1h-1zM362 222h1v1h-1zM363 222h1v1h-1zM364 223h1v2h-1zM365 225h1v3h-1zM366 228h1v18h-1zM367 246h1v89h-1zM368 335h1v17h-1zM369 351h1v1h-1zM370 351h1v1h-1zM371 351h1v1h-1zM372 351h1v1h-1zM373 351h1v1h-1zM374 351h1v1h-1zM375 351h1v1h-1zM376 351h1v1h-1zM377 351h1v1h-1zM378 351h1v1h-1zM379 351h1v1h-1zM380 351h1v1h-1zM381 351h1v1h-1zM382 235h1v117h-1zM383 228h1v7h-1zM384 226h1v2h-1zM385 224h1v2h-1zM386 223h1v1h-1zM387 222h1v1h-1zM388 222h1v1h-1zM389 222h1v1h-1zM390 222h1v1h-1zM391 223h1v1h-1zM392 224h1v3h-1zM393 227h1v4h-1zM394 231h1v71h-1zM395 302h1v50h-1zM396 351h1v1h-1zM397 351h1v1h-1zM398 351h1v1h-1zM399 351h1v1h-1zM400 351h1v1h-1zM401 351h1v1h-1zM402 351h1v1h-1zM403 351h1v1h-1zM404 351h1v1h-1zM405 351h1v1h-1zM406 351h1v1h-1zM407 351h1v1h-1zM408 351h1v1h-1zM409 347h1v5h-1zM410 230h1v117h-1zM411 227h1v3h-1zM412 225h1v2h-1zM413 224h1v1h-1zM414 223h1v1h-1zM415 222h1v1h-1zM416 222h1v1h-1zM417 222h1v1h-1zM418 223h1v1h-1zM419 224h1v2h-1zM420 226h1v3h-1zM421 229h1v40h-1zM422 269h1v83h-1zM423 351h1v1h-1zM424 351h1v1h-1zM425 351h1v1h-1zM426 351h1v1h-1zM427 351h1v1h-1zM428 351h1v1h-1zM429 351h1v1h-1zM430 351h1v1h-1zM431 351h1v1h-1zM432 351h1v1h-1zM433 351h1v1h-1zM434 351h1v1h-1zM435 351h1v1h-1zM436 351h1v1h-1zM437 231h1v121h-1zM438 228h1v3h-1zM439 226h1v2h-1zM440 224h1v2h-1zM441 223h1v1h-1zM442 222h1v1h-1zM443 222h1v1h-1zM444 222h1v1h-1zM445 222h1v1h-1zM446 223h1v2h-1zM447 225h1v3h-1zM448 228h1v7h-1zM449 235h1v89h-1zM450 324h1v28h-1zM451 351h1v1h-1zM452 351h1v1h-1zM453 351h1v1h-1zM454 351h1v1h-1zM455 351h1v1h-1zM456 351h1v1h-1zM457 351h1v1h-1zM458 351h1v1h-1zM459 351h1v1h-1zM460 351h1v1h-1zM461 351h1v1h-1zM462 351h1v1h-1zM463 351h1v1h-1zM464 272h1v80h-1zM465 229h1v43h-1zM466 226h1v3h-1zM467 225h1v1h-1zM468 223h1v2h-1zM469 223h1v1h-1zM470 222h1v1h-1zM471 222h1v1h-1zM472 222h1v1h-1zM473 223h1v1h-1zM474 224h1v3h-1zM475 227h1v3h-1zM476 230h1v61h-1zM477 291h1v61h-1zM478 351h1v1h-1zM479 351h1v1h-1zM480 351h1v1h-1zM481 351h1v1h-1zM482 351h1v1h-1zM483 351h1v1h-1zM484 351h1v1h-1zM485 351h1v1h-1zM486 351h1v1h-1zM487 351h1v1h-1zM488 351h1v1h-1zM489 351h1v1h-1zM490 351h1v1h-1zM491 351h1v1h-1zM492 230h1v122h-1zM493 227h1v3h-1zM494 225h1v2h-1zM495 224h1v1h-1zM496 223h1v1h-1zM497 222h1v1h-1zM498 222h1v1h-1zM499 222h1v1h-1zM500 223h1v1h-1zM501 224h1v2h-1zM502 226h1v3h-1zM503 229h1v28h-1zM504 257h1v89h-1zM505 346h1v6h-1zM506 351h1v1h-1zM507 351h1v1h-1zM508 351h1v1h-1zM509 351h1v1h-1zM510 351h1v1h-1zM511 351h1v1h-1zM512 351h1v1h-1zM513 351h1v1h-1zM514 351h1v1h-1zM515 351h1v1h-1zM516 351h1v1h-1zM517 351h1v1h-1zM518 351h1v1h-1zM519 231h1v121h-1zM520 228h1v3h-1zM521 226h1v2h-1zM522 224h1v2h-1zM523 223h1v1h-1zM524 222h1v1h-1zM525 222h1v1h-1zM526 222h1v1h-1zM527 222h1v1h-1zM528 223h1v2h-1zM529 225h1v2h-1zM530 227h1v4h-1zM531 231h1v82h-1zM532 313h1v39h-1zM533 351h1v1h-1zM534 351h1v1h-1zM535 351h1v1h-1zM536 351h1v1h-1zM537 351h1v1h-1zM538 351h1v1h-1zM539 351h1v1h-1zM540 351h1v1h-1zM541 351h1v1h-1zM542 351h1v1h-1zM543 351h1v1h-1zM544 351h1v1h-1zM545 351h1v1h-1zM546 310h1v42h-1zM547 229h1v81h-1zM548 227h1v2h-1zM549 225h1v2h-1zM550 224h1v1h-1zM551 223h1v1h-1zM552 222h1v1h-1zM553 222h1v1h-1zM554 222h1v1h-1zM555 223h1v1h-1zM556 224h1v2h-1zM557 226h1v4h-1zM558 230h1v50h-1zM559 280h1v72h-1zM560 351h1v1h-1zM561 351h1v1h-1zM562 351h1v1h-1zM563 351h1v1h-1zM564 351h1v1h-1zM565 351h1v1h-1zM566 351h1v1h-1zM567 351h1v1h-1zM568 351h1v1h-1zM569 351h1v1h-1zM570 351h1v1h-1zM571 351h1v1h-1zM572 351h1v1h-1zM573 351h1v1h-1zM574 230h1v122h-1zM575 227h1v3h-1zM576 225h1v2h-1zM577 224h1v1h-1zM578 223h1v1h-1zM579 222h1v1h-1zM580 222h1v1h-1zM581 222h1v1h-1zM582 222h1v1h-1zM583 223h1v2h-1zM584 225h1v3h-1zM585 228h1v18h-1zM586 246h1v89h-1zM587 335h1v17h-1zM588 351h1v1h-1zM589 351h1v1h-1zM590 351h1v1h-1zM591 351h1v1h-1zM592 351h1v1h-1zM593 351h1v1h-1zM594 351h1v1h-1zM595 351h1v1h-1zM596 351h1v1h-1zM597 351h1v1h-1zM598 351h1v1h-1zM599 351h1v1h-1zM600 351h1v1h-1zM601 235h1v117h-1zM602 228h1v7h-1zM603 226h1v2h-1zM604 224h1v2h-1zM605 223h1v1h-1zM606 222h1v1h-1zM607 222h1v1h-1zM608 222h1v1h-1zM609 222h1v1h-1zM610 223h1v1h-1zM611 224h1v3h-1zM612 227h1v4h-1zM613 231h1v71h-1zM614 302h1v50h-1zM615 351h1v1h-1zM616 351h1v1h-1zM617 351h1v1h-1zM618 351h1v1h-1zM619 351h1v1h-1zM620 351h1v1h-1zM621 351h1v1h-1zM622 351h1v1h-1zM623 351h1v1h-1zM624 351h1v1h-1zM625 351h1v1h-1zM626 351h1v1h-1zM627 351h1v1h-1zM628 347h1v5h-1zM629 230h1v117h-1zM630 227h1v3h-1zM631 225h1v2h-1zM632 224h1v1h-1zM633 223h1v1h-1zM634 222h1v1h-1zM635 222h1v1h-1zM636 222h1v1h-1zM637 223h1v1h-1zM638 224h1v2h-1zM639 226h1v3h-1zM640 229h1v40h-1zM641 269h1v83h-1zM642 351h1v1h-1zM643 351h1v1h-1zM644 351h1v1h-1zM645 351h1v1h-1zM646 351h1v1h-1zM647 351h1v1h-1zM648 351h1v1h-1zM649 351h1v1h-1zM650 351h1v1h-1zM651 351h1v1h-1zM652 351h1v1h-1zM653 351h1v1h-1zM654 351h1v1h-1zM655 351h1v1h-1zM656 231h1v121h-1zM657 228h1v3h-1zM658 226h1v2h-1zM659 224h1v2h-1zM660 223h1v1h-1zM661 222h1v1h-1zM662 222h1v1h-1zM663 222h1v1h-1zM664 222h1v1h-1zM665 223h1v2h-1zM666 225h1v3h-1zM667 228h1v7h-1zM668 235h1v89h-1zM669 324h1v28h-1zM670 351h1v1h-1zM671 351h1v1h-1zM672 351h1v1h-1zM673 351h1v1h-1zM674 351h1v1h-1zM675 351h1v1h-1zM676 351h1v1h-1zM677 351h1v1h-1zM678 351h1v1h-1zM679 351h1v1h-1zM680 351h1v1h-1zM681 351h1v1h-1zM682 351h1v1h-1zM683 272h1v80h-1zM684 229h1v43h-1zM685 226h1v3h-1zM686 225h1v1h-1zM687 223h1v2h-1zM688 223h1v1h-1zM689 222h1v1h-1zM690 222h1v1h-1zM691 222h1v1h-1zM692 223h1v1h-1zM693 224h1v3h-1zM694 227h1v3h-1zM695 230h1v61h-1zM696 291h1v61h-1zM697 351h1v1h-1zM698 351h1v1h-1zM699 351h1v1h-1zM700 351h1v1h-1zM701 351h1v1h-1zM702 351h1v1h-1zM703 351h1v1h-1zM704 351h1v1h-1zM705 351h1v1h-1zM706 351h1v1h-1zM707 351h1v1h-1zM708 351h1v1h-1zM709 351h1v1h-1zM710 351h1v1h-1zM711 230h1v122h-1zM712 227h1v3h-1zM713 225h1v2h-1zM714 224h1v1h-1zM715 223h1v1h-1zM716 222h1v1h-1zM717 222h1v1h-1zM718 222h1v1h-1zM719 223h1v1h-1zM720 224h1v2h-1zM721 226h1v3h-1zM722 229h1v28h-1zM723 257h1v89h-1zM724 346h1v6h-1zM725 351h1v1h-1zM726 351h1v1h-1zM727 351h1v1h-1zM728 351h1v1h-1zM729 351h1v1h-1zM730 351h1v1h-1zM731 351h1v1h-1zM732 351h1v1h-1zM733 351h1v1h-1zM734 351h1v1h-1zM735 351h1v1h-1zM736 351h1v1h-1zM737 351h1v1h-1zM738 231h1v121h-1zM739 228h1v3h-1zM740 226h1v2h-1zM741 224h1v2h-1zM742 223h1v1h-1zM743 222h1v1h-1zM744 222h1v1h-1zM745 222h1v1h-1zM746 222h1v1h-1zM747 223h1v2h-1zM748 225h1v2h-1zM749 227h1v4h-1zM750 231h1v82h-1zM751 313h1v39h-1zM752 351h1v1h-1zM753 351h1v1h-1zM754 351h1v1h-1zM755 351h1v1h-1zM756 351h1v1h-1zM757 351h1v1h-1zM758 351h1v1h-1zM759 351h1v1h-1zM760 351h1v1h-1zM761 351h1v1h-1zM762 351h1v1h-1zM763 351h1v1h-1zM764 351h1v1h-1zM765 310h1v42h-1zM766 229h1v81h-1zM767 227h1v2h-1zM768 225h1v2h-1zM769 224h1v1h-1zM770 223h1v1h-1zM771 222h1v1h-1zM772 222h1v1h-1zM773 222h1v1h-1zM774 223h1v1h-1zM775 224h1v2h-1zM776 226h1v4h-1zM777 230h1v50h-1zM778 280h1v72h-1zM779 351h1v1h-1zM780 351h1v1h-1zM781 351h1v1h-1zM782 351h1v1h-1zM783 351h1v1h-1zM784 351h1v1h-1zM785 351h1v1h-1zM786 351h1v1h-1zM787 351h1v1h-1zM788 351h1v1h-1zM789 351h1v1h-1zM790 351h1v1h-1zM791 351h1v1h-1zM792 351h1v1h-1zM793 230h1v122h-1zM794 227h1v3h-1zM795 225h1v2h-1zM796 224h1v1h-1zM797 223h1v1h-1zM798 222h1v1h-1zM799 222h1v1h-1zM800 222h1v1h-1zM801 222h1v1h-1zM802 223h1v2h-1zM803 225h1v3h-1zM804 228h1v18h-1zM805 246h1v89h-1zM806 335h1v17h-1zM807 351h1v1h-1zM808 351h1v1h-1zM809 351h1v1h-1zM810 351h1v1h-1zM811 351h1v1h-1zM812 351h1v1h-1zM813 351h1v1h-1zM814 351h1v1h-1zM815 351h1v1h-1zM816 351h1v1h-1zM817 351h1v1h-1zM818 351h1v1h-1zM819 351h1v1h-1zM820 235h1v117h-1zM821 228h1v7h-1zM822 226h1v2h-1zM823 224h1v2h-1zM824 223h1v1h-1zM825 222h1v1h-1zM826 222h1v1h-1zM827 222h1v1h-1zM828 222h1v1h-1zM829 223h1v1h-1zM830 224h1v3h-1zM831 227h1v4h-1zM832 231h1v71h-1zM833 302h1v50h-1zM834 351h1v1h-1zM835 351h1v1h-1zM836 351h1v1h-1zM837 351h1v1h-1zM838 351h1v1h-1zM839 351h1v1h-1zM840 351h1v1h-1zM841 351h1v1h-1zM842 351h1v1h-1zM843 351h1v1h-1zM844 351h1v1h-1zM845 351h1v1h-1zM846 351h1v1h-1zM847 347h1v5h-1zM848 230h1v117h-1zM849 227h1v3h-1zM850 225h1v2h-1zM851 224h1v1h-1zM852 223h1v1h-1zM853 222h1v1h-1zM854 222h1v1h-1zM855 222h1v1h-1zM856 223h1v1h-1zM857 224h1v2h-1zM858 226h1v3h-1zM859 229h1v40h-1zM860 269h1v83h-1zM861 351h1v1h-1zM862 351h1v1h-1zM863 351h1v1h-1zM864 351h1v1h-1zM865 351h1v1h-1zM866 351h1v1h-1zM867 351h1v1h-1zM868 351h1v1h-1zM869 351h1v1h-1zM870 351h1v1h-1zM871 351h1v1h-1zM872 351h1v1h-1zM873 351h1v1h-1zM874 351h1v1h-1zM875 231h1v121h-1zM876 228h1v3h-1zM877 226h1v2h-1zM878 224h1v2h-1zM879 223h1v1h-1zM880 222h1v1h-1zM881 222h1v1h-1zM882 222h1v1h-1zM883 222h1v1h-1zM884 223h1v2h-1zM885 225h1v3h-1zM886 228h1v7h-1zM887 235h1v89h-1zM888 324h1v28h-1zM889 351h1v1h-1zM890 351h1v1h-1zM891 351h1v1h-1zM892 351h1v1h-1zM893 351h1v1h-1zM894 351h1v1h-1zM895 351h1v1h-1zM896 351h1v1h-1zM897 351h1v1h-1zM898 351h1v1h-1zM899 351h1v1h-1zM900 351h1v1h-1zM901 351h1v1h-1zM902 272h1v80h-1zM903 229h1v43h-1zM904 226h1v3h-1zM905 225h1v1h-1zM906 223h1v2h-1zM907 223h1v1h-1zM908 222h1v1h-1zM909 222h1v1h-1zM910 222h1v1h-1zM911 223h1v1h-1zM912 224h1v3h-1zM913 227h1v3h-1zM914 230h1v61h-1zM915 291h1v61h-1zM916 351h1v1h-1zM917 351h1v1h-1zM918 351h1v1h-1zM919 351h1v1h-1zM920 351h1v1h-1zM921 351h1v1h-1zM922 351h1v1h-1zM923 351h1v1h-1zM924 351h1v1h-1zM925 351h1v1h-1zM926 351h1v1h-1zM927 351h1v1h-1zM928 351h1v1h-1zM929 351h1v1h-1z" fill="#ff0000"/><path d="M53 394h1v48h-1zM54 394h1v1h-1zM55 392h1v2h-1zM56 391h1v1h-1zM57 391h1v1h-1zM58 390h1v1h-1zM59 390h1v1h-1zM60 390h1v1h-1zM61 390h1v1h-1zM62 391h1v1h-1zM63 392h1v1h-1zM64 393h1v2h-1zM65 395h1v21h-1zM66 416h1v41h-1zM67 457h1v41h-1zM68 498h1v22h-1zM69 520h1v1h-1zM70 521h1v1h-1zM71 522h1v1h-1zM72 522h1v1h-1zM73 522h1v1h-1zM74 522h1v1h-1zM75 522h1v1h-1zM76 521h1v1h-1zM77 520h1v1h-1zM78 518h1v2h-1zM79 472h1v46h-1zM80 422h1v50h-1zM81 396h1v26h-1zM82 395h1v1h-1zM83 394h1v1h-1zM84 393h1v1h-1zM85 393h1v1h-1zM86 392h1v1h-1zM87 392h1v1h-1zM88 392h1v1h-1zM89 393h1v1h-1zM90 393h1v1h-1zM91 394h1v2h-1zM92 396h1v7h-1zM93 403h1v39h-1zM94 442h1v40h-1zM95 482h1v35h-1zM96 517h1v2h-1zM97 519h1v1h-1zM98 520h1v1h-1zM99 520h1v1h-1zM100 520h1v1h-1zM101 520h1v1h-1zM102 520h1v1h-1zM103 519h1v1h-1zM104 518h1v1h-1zM105 517h1v1h-1zM106 490h1v27h-1zM107 441h1v49h-1zM108 399h1v42h-1zM109 397h1v2h-1zM110 396h1v1h-1zM111 395h1v1h-1zM112 395h1v1h-1zM113 394h1v1h-1zM114 394h1v1h-1zM115 394h1v1h-1zM116 395h1v1h-1zM117 395h1v1h-1zM118 396h1v1h-1zM119 397h1v2h-1zM120 399h1v29h-1zM121 428h1v39h-1zM122 467h1v38h-1zM123 505h1v11h-1zM124 516h1v2h-1zM125 518h1v1h-1zM126 518h1v1h-1zM127 518h1v1h-1zM128 518h1v1h-1zM129 518h1v1h-1zM130 518h1v1h-1zM131 517h1v1h-1zM132 516h1v1h-1zM133 507h1v9h-1zM134 459h1v48h-1zM135 412h1v47h-1zM136 400h1v12h-1zM137 399h1v1h-1zM138 398h1v1h-1zM139 397h1v1h-1zM140 397h1v1h-1zM141 396h1v1h-1zM142 396h1v1h-1zM143 397h1v1h-1zM144 397h1v1h-1zM145 398h1v1h-1zM146 399h1v1h-1zM147 400h1v15h-1zM148 415h1v38h-1zM149 453h1v37h-1zM150 490h1v24h-1zM151 514h1v1h-1zM152 515h1v1h-1zM153 516h1v1h-1zM154 516h1v1h-1zM155 516h1v1h-1zM156 516h1v1h-1zM157 516h1v1h-1zM158 515h1v1h-1zM159 514h1v1h-1zM160 513h1v1h-1zM161 476h1v37h-1zM162 431h1v45h-1zM163 402h1v29h-1zM164 401h1v1h-1zM165 400h1v1h-1zM166 399h1v1h-1zM167 399h1v1h-1zM168 398h1v1h-1zM169 398h1v1h-1zM170 399h1v1h-1zM171 399h1v1h-1zM172 399h1v1h-1zM173 400h1v2h-1zM174 402h1v1h-1zM175 403h1v36h-1zM176 439h1v36h-1zM177 475h1v36h-1zM178 511h1v2h-1zM179 513h1v1h-1zM180 514h1v1h-1zM181 514h1v1h-1zM182 514h1v1h-1zM183 514h1v1h-1zM184 514h1v1h-1zM185 513h1v1h-1zM186 513h1v1h-1zM187 511h1v2h-1zM188 492h1v19h-1zM189 448h1v44h-1zM190 405h1v43h-1zM191 403h1v2h-1zM192 402h1v1h-1zM193 401h1v1h-1zM194 401h1v1h-1zM195 401h1v1h-1zM196 400h1v1h-1zM197 401h1v1h-1zM198 401h1v1h-1zM199 401h1v1h-1zM200 402h1v1h-1zM201 403h1v2h-1zM202 405h1v22h-1zM203 427h1v35h-1zM204 462h1v34h-1zM205 496h1v14h-1zM206 510h1v1h-1zM207 511h1v1h-1zM208 512h1v1h-1zM209 512h1v1h-1zM210 512h1v1h-1zM211 512h1v1h-1zM212 512h1v1h-1zM213 511h1v1h-1zM214 510h1v1h-1zM215 507h1v3h-1zM216 465h1v42h-1zM217 422h1v43h-1zM218 406h1v16h-1zM219 405h1v1h-1zM220 404h1v1h-1zM221 403h1v1h-1zM222 403h1v1h-1zM223 403h1v1h-1zM224 403h1v1h-1zM225 403h1v1h-1zM226 403h1v1h-1zM227 404h1v1h-1zM228 405h1v1h-1zM229 406h1v10h-1zM230 416h1v33h-1zM231 449h1v33h-1zM232 482h1v26h-1zM233 508h1v1h-1zM234 509h1v1h-1zM235 510h1v1h-1zM236 510h1v1h-1zM237 510h1v1h-1zM238 510h1v1h-1zM239 510h1v1h-1zM240 509h1v1h-1zM241 508h1v1h-1zM242 507h1v1h-1zM243 480h1v27h-1zM244 439h1v41h-1zM245 408h1v31h-1zM246 407h1v1h-1zM247 406h1v1h-1zM248 405h1v1h-1zM249 405h1v1h-1zM250 405h1v1h-1zM251 405h1v1h-1zM252 405h1v1h-1zM253 405h1v1h-1zM254 405h1v1h-1zM255 406h1v1h-1zM256 407h1v2h-1zM257 409h1v28h-1zM258 437h1v32h-1zM259 469h1v32h-1zM260 501h1v6h-1zM261 507h1v1h-1zM262 508h1v1h-1zM263 508h1v1h-1zM264 508h1v1h-1zM265 508h1v1h-1zM266 508h1v1h-1zM267 507h1v1h-1zM268 507h1v1h-1zM269 506h1v1h-1zM270 494h1v12h-1zM271 454h1v40h-1zM272 415h1v39h-1zM273 409h1v6h-1zM274 408h1v1h-1zM275 407h1v1h-1zM276 407h1v1h-1zM277 407h1v1h-1zM278 407h1v1h-1zM279 407h1v1h-1zM280 407h1v1h-1zM281 407h1v1h-1zM282 408h1v1h-1zM283 409h1v1h-1zM284 410h1v16h-1zM285 426h1v31h-1zM286 457h1v31h-1zM287 488h1v16h-1zM288 504h1v1h-1zM289 505h1v1h-1zM290 506h1v1h-1zM291 506h1v1h-1zM292 506h1v1h-1zM293 506h1v1h-1zM294 506h1v1h-1zM295 505h1v1h-1zM296 504h1v1h-1zM297 503h1v1h-1zM298 468h1v35h-1zM299 431h1v37h-1zM300 412h1v19h-1zM301 411h1v1h-1zM302 410h1v1h-1zM303 409h1v1h-1zM304 409h1v1h-1zM305 409h1v1h-1zM306 409h1v1h-1zM307 409h1v1h-1zM308 409h1v1h-1zM309 410h1v1h-1zM310 410h1v2h-1zM311 412h1v5h-1zM312 417h1v29h-1zM313 446h1v30h-1zM314 476h1v26h-1zM315 502h1v1h-1zM316 503h1v1h-1zM317 504h1v1h-1zM318 504h1v1h-1zM319 504h1v1h-1zM320 504h1v1h-1zM321 504h1v1h-1zM322 503h1v1h-1zM323 503h1v1h-1zM324 501h1v2h-1zM325 482h1v19h-1zM326 445h1v37h-1zM327 414h1v31h-1zM328 413h1v1h-1zM329 412h1v1h-1zM330 411h1v1h-1zM331 411h1v1h-1zM332 411h1v1h-1zM333 411h1v1h-1zM334 411h1v1h-1zM335 411h1v1h-1zM336 411h1v1h-1zM337 412h1v1h-1zM338 413h1v1h-1zM339 414h1v22h-1zM340 436h1v28h-1zM341 464h1v29h-1zM342 493h1v8h-1zM343 501h1v1h-1zM344 501h1v1h-1zM345 502h1v1h-1zM346 502h1v1h-1zM347 502h1v1h-1zM348 502h1v1h-1zM349 501h1v1h-1zM350 501h1v1h-1zM351 500h1v1h-1zM352 493h1v7h-1zM353 459h1v34h-1zM354 424h1v35h-1zM355 415h1v9h-1zM356 414h1v1h-1zM357 414h1v1h-1zM358 413h1v1h-1zM359 413h1v1h-1zM360 413h1v1h-1zM361 413h1v1h-1zM362 413h1v1h-1zM363 413h1v1h-1zM364 414h1v1h-1zM365 415h1v1h-1zM366 416h1v11h-1zM367 427h1v27h-1zM368 454h1v27h-1zM369 481h1v17h-1zM370 498h1v1h-1zM371 499h1v1h-1zM372 500h1v1h-1zM373 500h1v1h-1zM374 500h1v1h-1zM375 500h1v1h-1zM376 500h1v1h-1zM377 499h1v1h-1zM378 498h1v1h-1zM379 497h1v1h-1zM380 471h1v26h-1zM381 438h1v33h-1zM382 417h1v21h-1zM383 416h1v1h-1zM384 416h1v1h-1zM385 415h1v1h-1zM386 415h1v1h-1zM387 415h1v1h-1zM388 415h1v1h-1zM389 415h1v1h-1zM390 415h1v1h-1zM391 415h1v1h-1zM392 416h1v1h-1zM393 417h1v2h-1zM394 419h1v25h-1zM395 444h1v26h-1zM396 470h1v26h-1zM397 496h1v1h-1zM398 497h1v1h-1zM399 498h1v1h-1zM400 498h1v1h-1zM401 498h1v1h-1zM402 498h1v1h-1zM403 498h1v1h-1zM404 497h1v1h-1zM405 497h1v1h-1zM406 496h1v1h-1zM407 482h1v14h-1zM408 451h1v31h-1zM409 420h1v31h-1zM410 419h1v1h-1zM411 418h1v1h-1zM412 417h1v1h-1zM413 417h1v1h-1zM414 417h1v1h-1zM415 417h1v1h-1zM416 417h1v1h-1zM417 417h1v1h-1zM418 417h1v1h-1zM419 418h1v1h-1zM420 419h1v1h-1zM421 420h1v16h-1zM422 436h1v24h-1zM423 460h1v25h-1zM424 485h1v10h-1zM425 495h1v1h-1zM426 495h1v1h-1zM427 496h1v1h-1zM428 496h1v1h-1zM429 496h1v1h-1zM430 496h1v1h-1zM431 495h1v1h-1zM432 495h1v1h-1zM433 494h1v1h-1zM434 492h1v2h-1zM435 462h1v30h-1zM436 433h1v29h-1zM437 421h1v12h-1zM438 420h1v1h-1zM439 420h1v1h-1zM440 419h1v1h-1zM441 419h1v1h-1zM442 419h1v1h-1zM443 419h1v1h-1zM444 419h1v1h-1zM445 419h1v1h-1zM446 420h1v1h-1zM447 420h1v1h-1zM448 421h1v7h-1zM449 428h1v23h-1zM450 451h1v24h-1zM451 475h1v17h-1zM452 492h1v1h-1zM453 493h1v1h-1zM454 494h1v1h-1zM455 494h1v1h-1zM456 494h1v1h-1zM457 494h1v1h-1zM458 493h1v1h-1zM459 493h1v1h-1zM460 492h1v1h-1zM461 492h1v1h-1zM462 473h1v19h-1zM463 444h1v29h-1zM464 423h1v21h-1zM465 422h1v1h-1zM466 422h1v1h-1zM467 421h1v1h-1zM468 421h1v1h-1zM469 421h1v1h-1zM470 421h1v1h-1zM471 421h1v1h-1zM472 421h1v1h-1zM473 421h1v1h-1zM474 422h1v1h-1zM475 423h1v1h-1zM476 424h1v20h-1zM477 444h1v22h-1zM478 466h1v21h-1zM479 487h1v4h-1zM480 491h1v1h-1zM481 491h1v1h-1zM482 492h1v1h-1zM483 492h1v1h-1zM484 492h1v1h-1zM485 492h1v1h-1zM486 491h1v1h-1zM487 491h1v1h-1zM488 490h1v1h-1zM489 482h1v8h-1zM490 455h1v27h-1zM491 429h1v26h-1zM492 425h1v4h-1zM493 424h1v1h-1zM494 423h1v1h-1zM495 423h1v1h-1zM496 423h1v1h-1zM497 423h1v1h-1zM498 423h1v1h-1zM499 423h1v1h-1zM500 423h1v1h-1zM501 424h1v1h-1zM502 425h1v1h-1zM503 426h1v11h-1zM504 437h1v20h-1zM505 457h1v21h-1zM506 478h1v11h-1zM507 489h1v1h-1zM508 489h1v1h-1zM509 490h1v1h-1zM510 490h1v1h-1zM511 490h1v1h-1zM512 490h1v1h-1zM513 489h1v1h-1zM514 489h1v1h-1zM515 488h1v1h-1zM516 488h1v1h-1zM517 465h1v23h-1zM518 440h1v25h-1zM519 427h1v13h-1zM520 426h1v1h-1zM521 426h1v1h-1zM522 425h1v1h-1zM523 425h1v1h-1zM524 425h1v1h-1zM525 425h1v1h-1zM526 425h1v1h-1zM527 425h1v1h-1zM528 426h1v1h-1zM529 426h1v1h-1zM530 427h1v4h-1zM531 431h1v19h-1zM532 450h1v19h-1zM533 469h1v17h-1zM534 486h1v1h-1zM535 487h1v1h-1zM536 487h1v1h-1zM537 488h1v1h-1zM538 488h1v1h-1zM539 488h1v1h-1zM540 487h1v1h-1zM541 487h1v1h-1zM542 487h1v1h-1zM543 486h1v1h-1zM544 473h1v13h-1zM545 450h1v23h-1zM546 429h1v21h-1zM547 428h1v1h-1zM548 428h1v1h-1zM549 427h1v1h-1zM550 427h1v1h-1zM551 427h1v1h-1zM552 427h1v1h-1zM553 427h1v1h-1zM554 427h1v1h-1zM555 427h1v1h-1zM556 428h1v1h-1zM557 429h1v1h-1zM558 430h1v14h-1zM559 444h1v18h-1zM560 462h1v18h-1zM561 480h1v5h-1zM562 485h1v1h-1zM563 485h1v1h-1zM564 486h1v1h-1zM565 486h1v1h-1zM566 486h1v1h-1zM567 485h1v1h-1zM568 485h1v1h-1zM569 485h1v1h-1zM570 484h1v1h-1zM571 480h1v4h-1zM572 458h1v22h-1zM573 436h1v22h-1zM574 431h1v5h-1zM575 430h1v1h-1zM576 429h1v1h-1zM577 429h1v1h-1zM578 429h1v1h-1zM579 429h1v1h-1zM580 429h1v1h-1zM581 429h1v1h-1zM582 429h1v1h-1zM583 430h1v1h-1zM584 430h1v1h-1zM585 431h1v7h-1zM586 438h1v17h-1zM587 455h1v17h-1zM588 472h1v11h-1zM589 483h1v1h-1zM590 483h1v1h-1zM591 483h1v1h-1zM592 484h1v1h-1zM593 484h1v1h-1zM594 483h1v1h-1zM595 483h1v1h-1zM596 483h1v1h-1zM597 482h1v1h-1zM598 482h1v1h-1zM599 466h1v16h-1zM600 446h1v20h-1zM601 433h1v13h-1zM602 432h1v1h-1zM603 432h1v1h-1zM604 431h1v1h-1zM605 431h1v1h-1zM606 431h1v1h-1zM607 431h1v1h-1zM608 431h1v1h-1zM609 431h1v1h-1zM610 432h1v1h-1zM611 432h1v1h-1zM612 433h1v1h-1zM613 434h1v15h-1zM614 449h1v16h-1zM615 465h1v15h-1zM616 480h1v1h-1zM617 481h1v1h-1zM618 481h1v1h-1zM619 482h1v1h-1zM620 482h1v1h-1zM621 481h1v1h-1zM622 481h1v1h-1zM623 481h1v1h-1zM624 481h1v1h-1zM625 480h1v1h-1zM626 472h1v8h-1zM627 453h1v19h-1zM628 435h1v18h-1zM629 434h1v1h-1zM630 434h1v1h-1zM631 433h1v1h-1zM632 433h1v1h-1zM633 433h1v1h-1zM634 433h1v1h-1zM635 433h1v1h-1zM636 433h1v1h-1zM637 434h1v1h-1zM638 434h1v1h-1zM639 434h1v1h-1zM640 435h1v10h-1zM641 445h1v14h-1zM642 459h1v14h-1zM643 473h1v6h-1zM644 479h1v1h-1zM645 479h1v1h-1zM646 479h1v1h-1zM647 479h1v1h-1zM648 479h1v1h-1zM649 479h1v1h-1zM650 479h1v1h-1zM651 479h1v1h-1zM652 478h1v1h-1zM653 477h1v2h-1zM654 460h1v17h-1zM655 443h1v17h-1zM656 436h1v7h-1zM657 436h1v1h-1zM658 435h1v1h-1zM659 435h1v1h-1zM660 435h1v1h-1zM661 435h1v1h-1zM662 435h1v1h-1zM663 435h1v1h-1zM664 435h1v1h-1zM665 436h1v1h-1zM666 436h1v1h-1zM667 437h1v4h-1zM668 441h1v13h-1zM669 454h1v13h-1zM670 467h1v10h-1zM671 477h1v1h-1zM672 477h1v1h-1zM673 477h1v1h-1zM674 477h1v1h-1zM675 477h1v1h-1zM676 477h1v1h-1zM677 477h1v1h-1zM678 477h1v1h-1zM679 477h1v1h-1zM680 476h1v1h-1zM681 466h1v10h-1zM682 450h1v16h-1zM683 439h1v11h-1zM684 438h1v1h-1zM685 438h1v1h-1zM686 437h1v1h-1zM687 437h1v1h-1zM688 437h1v1h-1zM689 437h1v1h-1zM690 437h1v1h-1zM691 437h1v1h-1zM692 438h1v1h-1zM693 438h1v1h-1zM694 439h1v1h-1zM695 439h1v11h-1zM696 450h1v12h-1zM697 462h1v11h-1zM698 473h1v2h-1zM699 475h1v1h-1zM700 475h1v1h-1zM701 475h1v1h-1zM702 475h1v1h-1zM703 475h1v1h-1zM704 475h1v1h-1zM705 475h1v1h-1zM706 475h1v1h-1zM707 474h1v1h-1zM708 470h1v5h-1zM709 456h1v14h-1zM710 442h1v14h-1zM711 440h1v2h-1zM712 440h1v1h-1zM713 439h1v1h-1zM714 439h1v1h-1zM715 439h1v1h-1zM716 439h1v1h-1zM717 439h1v1h-1zM718 439h1v1h-1zM719 440h1v1h-1zM720 440h1v1h-1zM721 440h1v1h-1zM722 441h1v6h-1zM723 447h1v10h-1zM724 457h1v11h-1zM725 468h1v5h-1zM726 473h1v1h-1zM727 473h1v1h-1zM728 473h1v1h-1zM729 473h1v1h-1zM730 473h1v1h-1zM731 473h1v1h-1zM732 473h1v1h-1zM733 473h1v1h-1zM734 473h1v1h-1zM735 472h1v1h-1zM736 461h1v11h-1zM737 449h1v12h-1zM738 442h1v7h-1zM739 442h1v1h-1zM740 441h1v1h-1zM741 441h1v1h-1zM742 441h1v1h-1zM743 441h1v1h-1zM744 441h1v1h-1zM745 441h1v1h-1zM746 442h1v1h-1zM747 442h1v1h-1zM748 442h1v1h-1zM749 443h1v1h-1zM750 444h1v10h-1zM751 454h1v9h-1zM752 463h1v8h-1zM753 471h1v1h-1zM754 471h1v1h-1zM755 471h1v1h-1zM756 471h1v1h-1zM757 471h1v1h-1zM758 471h1v1h-1zM759 471h1v1h-1zM760 471h1v1h-1zM761 471h1v1h-1zM762 470h1v1h-1zM763 465h1v6h-1zM764 454h1v11h-1zM765 444h1v10h-1zM766 444h1v1h-1zM767 443h1v1h-1zM768 443h1v1h-1zM769 443h1v1h-1zM770 443h1v1h-1zM771 443h1v1h-1zM772 443h1v1h-1zM773 444h1v1h-1zM774 444h1v1h-1zM775 444h1v1h-1zM776 444h1v1h-1zM777 445h1v6h-1zM778 451h1v8h-1zM779 459h1v8h-1zM780 467h1v2h-1zM781 469h1v1h-1zM782 469h1v1h-1zM783 469h1v1h-1zM784 469h1v1h-1zM785 469h1v1h-1zM786 469h1v1h-1zM787 469h1v1h-1zM788 469h1v1h-1zM789 468h1v1h-1zM790 467h1v2h-1zM791 458h1v9h-1zM792 449h1v9h-1zM793 446h1v3h-1zM794 446h1v1h-1zM795 445h1v1h-1zM796 445h1v1h-1zM797 445h1v1h-1zM798 445h1v1h-1zM799 445h1v1h-1zM800 446h1v1h-1zM801 446h1v1h-1zM802 446h1v1h-1zM803 446h1v1h-1zM804 447h1v3h-1zM805 450h1v6h-1zM806 456h1v7h-1zM807 463h1v4h-1zM808 467h1v1h-1zM809 467h1v1h-1zM810 467h1v1h-1zM811 467h1v1h-1zM812 467h1v1h-1zM813 467h1v1h-1zM814 467h1v1h-1zM815 467h1v1h-1zM816 467h1v1h-1zM817 466h1v1h-1zM818 461h1v6h-1zM819 453h1v8h-1zM820 448h1v5h-1zM821 448h1v1h-1zM822 447h1v1h-1zM823 447h1v1h-1zM824 447h1v1h-1zM825 447h1v1h-1zM826 447h1v1h-1zM827 448h1v1h-1zM828 448h1v1h-1zM829 448h1v1h-1zM830 448h1v1h-1zM831 448h1v1h-1zM832 449h1v6h-1zM833 455h1v5h-1zM834 460h1v5h-1zM835 465h1v1h-1zM836 465h1v1h-1zM837 465h1v1h-1zM838 465h1v1h-1zM839 465h1v1h-1zM840 465h1v1h-1zM841 465h1v1h-1zM842 465h1v1h-1zM843 465h1v1h-1zM844 464h1v1h-1zM845 462h1v3h-1zM846 456h1v6h-1zM847 450h1v6h-1zM848 450h1v1h-1zM849 449h1v1h-1zM850 449h1v1h-1zM851 449h1v1h-1zM852 449h1v1h-1zM853 449h1v1h-1zM854 450h1v1h-1zM855 450h1v1h-1zM856 450h1v1h-1zM857 450h1v1h-1zM858 450h1v1h-1zM859 451h1v3h-1zM860 454h1v4h-1zM861 458h1v4h-1zM862 462h1v2h-1zM863 463h1v1h-1zM864 463h1v1h-1zM865 463h1v1h-1zM866 463h1v1h-1zM867 463h1v1h-1zM868 463h1v1h-1zM869 463h1v1h-1zM870 463h1v1h-1zM871 463h1v1h-1zM872 462h1v1h-1zM873 458h1v5h-1zM874 454h1v4h-1zM875 452h1v2h-1zM876 451h1v1h-1zM877 451h1v1h-1zM878 451h1v1h-1zM879 451h1v1h-1zM880 451h1v1h-1zM881 452h1v1h-1zM882 452h1v1h-1zM883 452h1v1h-1zM884 452h1v1h-1zM885 452h1v1h-1zM886 452h1v2h-1zM887 454h1v3h-1zM888 457h1v2h-1zM889 459h1v3h-1zM890 461h1v1h-1zM891 461h1v1h-1zM892 461h1v1h-1zM893 461h1v1h-1zM894 461h1v1h-1zM895 461h1v1h-1zM896 461h1v1h-1zM897 461h1v1h-1zM898 461h1v1h-1zM899 461h1v1h-1zM900 459h1v2h-1zM901 456h1v3h-1zM902 454h1v2h-1zM903 453h1v1h-1zM904 453h1v1h-1zM905 453h1v1h-1zM906 453h1v1h-1zM907 453h1v1h-1zM908 454h1v1h-1zM909 454h1v1h-1zM910 454h1v1h-1zM911 454h1v1h-1zM912 454h1v1h-1zM913 454h1v1h-1zM914 455h1v1h-1zM915 456h1v2h-1zM916 458h1v1h-1zM917 459h1v1h-1zM918 459h1v1h-1zM919 459h1v1h-1zM920 459h1v1h-1zM921 459h1v1h-1zM922 459h1v1h-1zM923 459h1v1h-1zM924 459h1v1h-1zM925 459h1v1h-1zM926 459h1v1h-1zM927 459h1v1h-1zM928 457h1v2h-1zM929 456h1v1h-1z" fill="#ffa500"/><path d="M53 563h1v1h-1zM54 563h1v1h-1zM55 563h1v1h-1zM56 563h1v1h-1zM57 563h1v1h-1zM58 563h1v1h-1zM59 563h1v1h-1zM60 563h1v1h-1zM61 563h1v1h-1zM62 563h1v1h-1zM63 563h1v1h-1zM64 563h1v1h-1zM65 563h1v1h-1zM66 563h1v1h-1zM67 563h1v122h-1zM68 685h1v3h-1zM69 688h1v2h-1zM70 690h1v2h-1zM71 692h1v1h-1zM72 692h1v1h-1zM73 692h1v1h-1zM74 692h1v1h-1zM75 692h1v1h-1zM76 691h1v1h-1zM77 690h1v1h-1zM78 687h1v3h-1zM79 684h1v3h-1zM80 563h1v121h-1zM81 563h1v1h-1zM82 563h1v1h-1zM83 563h1v1h-1zM84 563h1v1h-1zM85 563h1v1h-1zM86 563h1v1h-1zM87 563h1v1h-1zM88 563h1v1h-1zM89 563h1v1h-1zM90 563h1v1h-1zM91 563h1v1h-1zM92 563h1v1h-1zM93 563h1v1h-1zM94 563h1v94h-1zM95 657h1v30h-1zM96 687h1v3h-1zM97 690h1v1h-1zM98 691h1v1h-1zM99 692h1v1h-1zM100 692h1v1h-1zM101 692h1v1h-1zM102 692h1v1h-1zM103 692h1v1h-1zM104 690h1v2h-1zM105 688h1v2h-1zM106 685h1v3h-1zM107 563h1v122h-1zM108 563h1v1h-1zM109 563h1v1h-1zM110 563h1v1h-1zM111 563h1v1h-1zM112 563h1v1h-1zM113 563h1v1h-1zM114 563h1v1h-1zM115 563h1v1h-1zM116 563h1v1h-1zM117 563h1v1h-1zM118 563h1v1h-1zM119 563h1v1h-1zM120 563h1v1h-1zM121 563h1v37h-1zM122 600h1v86h-1zM123 686h1v3h-1zM124 689h1v2h-1zM125 691h1v1h-1zM126 692h1v1h-1zM127 692h1v1h-1zM128 692h1v1h-1zM129 692h1v1h-1zM130 692h1v1h-1zM131 691h1v1h-1zM132 689h1v2h-1zM133 687h1v2h-1zM134 634h1v53h-1zM135 563h1v71h-1zM136 563h1v1h-1zM137 563h1v1h-1zM138 563h1v1h-1zM139 563h1v1h-1zM140 563h1v1h-1zM141 563h1v1h-1zM142 563h1v1h-1zM143 563h1v1h-1zM144 563h1v1h-1zM145 563h1v1h-1zM146 563h1v1h-1zM147 563h1v1h-1zM148 563h1v1h-1zM149 563h1v121h-1zM150 684h1v4h-1zM151 688h1v2h-1zM152 690h1v2h-1zM153 692h1v1h-1zM154 692h1v1h-1zM155 692h1v1h-1zM156 692h1v1h-1zM157 692h1v1h-1zM158 691h1v1h-1zM159 690h1v1h-1zM160 688h1v2h-1zM161 685h1v3h-1zM162 563h1v122h-1zM163 563h1v1h-1zM164 563h1v1h-1zM165 563h1v1h-1zM166 563h1v1h-1zM167 563h1v1h-1zM168 563h1v1h-1zM169 563h1v1h-1zM170 563h1v1h-1zM171 563h1v1h-1zM172 563h1v1h-1zM173 563h1v1h-1zM174 563h1v1h-1zM175 563h1v1h-1zM176 563h1v75h-1zM177 638h1v48h-1zM178 686h1v3h-1zM179 689h1v2h-1zM180 691h1v1h-1zM181 692h1v1h-1zM182 692h1v1h-1zM183 692h1v1h-1zM184 692h1v1h-1zM185 692h1v1h-1zM186 690h1v2h-1zM187 688h1v2h-1zM188 686h1v2h-1zM189 563h1v123h-1zM190 563h1v1h-1zM191 563h1v1h-1zM192 563h1v1h-1zM193 563h1v1h-1zM194 563h1v1h-1zM195 563h1v1h-1zM196 563h1v1h-1zM197 563h1v1h-1zM198 563h1v1h-1zM199 563h1v1h-1zM200 563h1v1h-1zM201 563h1v1h-1zM202 563h1v1h-1zM203 563h1v18h-1zM204 581h1v104h-1zM205 685h1v3h-1zM206 688h1v3h-1zM207 691h1v1h-1zM208 692h1v1h-1zM209 692h1v1h-1zM210 692h1v1h-1zM211 692h1v1h-1zM212 692h1v1h-1zM213 691h1v1h-1zM214 689h1v2h-1zM215 687h1v2h-1zM216 672h1v15h-1zM217 563h1v109h-1zM218 563h1v1h-1zM219 563h1v1h-1zM220 563h1v1h-1zM221 563h1v1h-1zM222 563h1v1h-1zM223 563h1v1h-1zM224 563h1v1h-1zM225 563h1v1h-1zM226 563h1v1h-1zM227 563h1v1h-1zM228 563h1v1h-1zM229 563h1v1h-1zM230 563h1v1h-1zM231 563h1v112h-1zM232 675h1v12h-1zM233 687h1v3h-1zM234 690h1v2h-1zM235 692h1v1h-1zM236 692h1v1h-1zM237 692h1v1h-1zM238 692h1v1h-1zM239 692h1v1h-1zM240 691h1v1h-1zM241 690h1v1h-1zM242 688h1v2h-1zM243 685h1v3h-1zM244 563h1v122h-1zM245 563h1v1h-1zM246 563h1v1h-1zM247 563h1v1h-1zM248 563h1v1h-1zM249 563h1v1h-1zM250 563h1v1h-1zM251 563h1v1h-1zM252 563h1v1h-1zM253 563h1v1h-1zM254 563h1v1h-1zM255 563h1v1h-1zM256 563h1v1h-1zM257 563h1v1h-1zM258 563h1v56h-1zM259 619h1v67h-1zM260 686h1v3h-1zM261 689h1v2h-1zM262 691h1v1h-1zM263 692h1v1h-1zM264 692h1v1h-1zM265 692h1v1h-1zM266 692h1v1h-1zM267 692h1v1h-1zM268 691h1v1h-1zM269 689h1v2h-1zM270 686h1v3h-1zM271 597h1v89h-1zM272 563h1v34h-1zM273 563h1v1h-1zM274 563h1v1h-1zM275 563h1v1h-1zM276 563h1v1h-1zM277 563h1v1h-1zM278 563h1v1h-1zM279 563h1v1h-1zM280 563h1v1h-1zM281 563h1v1h-1zM282 563h1v1h-1zM283 563h1v1h-1zM284 563h1v1h-1zM285 563h1v1h-1zM286 564h1v121h-1zM287 685h1v3h-1zM288 688h1v2h-1zM289 690h1v2h-1zM290 692h1v1h-1zM291 692h1v1h-1zM292 692h1v1h-1zM293 692h1v1h-1zM294 692h1v1h-1zM295 691h1v1h-1zM296 690h1v1h-1zM297 687h1v3h-1zM298 684h1v3h-1zM299 563h1v121h-1zM300 563h1v1h-1zM301 563h1v1h-1zM302 563h1v1h-1zM303 563h1v1h-1zM304 563h1v1h-1zM305 563h1v1h-1zM306 563h1v1h-1zM307 563h1v1h-1zM308 563h1v1h-1zM309 563h1v1h-1zM310 563h1v1h-1zM311 563h1v1h-1zM312 563h1v1h-1zM313 563h1v94h-1zM314 657h1v30h-1zM315 687h1v3h-1zM316 690h1v1h-1zM317 691h1v1h-1zM318 692h1v1h-1zM319 692h1v1h-1zM320 692h1v1h-1zM321 692h1v1h-1zM322 692h1v1h-1zM323 690h1v2h-1zM324 688h1v2h-1zM325 685h1v3h-1zM326 563h1v122h-1zM327 563h1v1h-1zM328 563h1v1h-1zM329 563h1v1h-1zM330 563h1v1h-1zM331 563h1v1h-1zM332 563h1v1h-1zM333 563h1v1h-1zM334 563h1v1h-1zM335 563h1v1h-1zM336 563h1v1h-1zM337 563h1v1h-1zM338 563h1v1h-1zM339 563h1v1h-1zM340 563h1v37h-1zM341 600h1v86h-1zM342 686h1v3h-1zM343 689h1v2h-1zM344 691h1v1h-1zM345 692h1v1h-1zM346 692h1v1h-1zM347 692h1v1h-1zM348 692h1v1h-1zM349 692h1v1h-1zM350 691h1v1h-1zM351 689h1v2h-1zM352 687h1v2h-1zM353 634h1v53h-1zM354 563h1v71h-1zM355 563h1v1h-1zM356 563h1v1h-1zM357 563h1v1h-1zM358 563h1v1h-1zM359 563h1v1h-1zM360 563h1v1h-1zM361 563h1v1h-1zM362 563h1v1h-1zM363 563h1v1h-1zM364 563h1v1h-1zM365 563h1v1h-1zM366 563h1v1h-1zM367 563h1v1h-1zM368 563h1v121h-1zM369 684h1v4h-1zM370 688h1v2h-1zM371 690h1v2h-1zM372 692h1v1h-1zM373 692h1v1h-1zM374 692h1v1h-1zM375 692h1v1h-1zM376 692h1v1h-1zM377 691h1v1h-1zM378 690h1v1h-1zM379 688h1v2h-1zM380 685h1v3h-1zM381 563h1v122h-1zM382 563h1v1h-1zM383 563h1v1h-1zM384 563h1v1h-1zM385 563h1v1h-1zM386 563h1v1h-1zM387 563h1v1h-1zM388 563h1v1h-1zM389 563h1v1h-1zM390 563h1v1h-1zM391 563h1v1h-1zM392 563h1v1h-1zM393 563h1v1h-1zM394 563h1v1h-1zM395 563h1v75h-1zM396 638h1v48h-1zM397 686h1v3h-1zM398 689h1v2h-1zM399 691h1v1h-1zM400 692h1v1h-1zM401 692h1v1h-1zM402 692h1v1h-1zM403 692h1v1h-1zM404 692h1v1h-1zM405 690h1v2h-1zM406 688h1v2h-1zM407 686h1v2h-1zM408 563h1v123h-1zM409 563h1v1h-1zM410 563h1v1h-1zM411 563h1v1h-1zM412 563h1v1h-1zM413 563h1v1h-1zM414 563h1v1h-1zM415 563h1v1h-1zM416 563h1v1h-1zM417 563h1v1h-1zM418 563h1v1h-1zM419 563h1v1h-1zM420 563h1v1h-1zM421 563h1v1h-1zM422 563h1v18h-1zM423 581h1v104h-1zM424 685h1v3h-1zM425 688h1v3h-1zM426 691h1v1h-1zM427 692h1v1h-1zM428 692h1v1h-1zM429 692h1v1h-1zM430 692h1v1h-1zM431 692h1v1h-1zM432 691h1v1h-1zM433 689h1v2h-1zM434 687h1v2h-1zM435 672h1v15h-1zM436 563h1v109h-1zM437 563h1v1h-1zM438 563h1v1h-1zM439 563h1v1h-1zM440 563h1v1h-1zM441 563h1v1h-1zM442 563h1v1h-1zM443 563h1v1h-1zM444 563h1v1h-1zM445 563h1v1h-1zM446 563h1v1h-1zM447 563h1v1h-1zM448 563h1v1h-1zM449 563h1v1h-1zM450 563h1v112h-1zM451 675h1v12h-1zM452 687h1v3h-1zM453 690h1v2h-1zM454 692h1v1h-1zM455 692h1v1h-1zM456 692h1v1h-1zM457 692h1v1h-1zM458 692h1v1h-1zM459 691h1v1h-1zM460 690h1v1h-1zM461 688h1v2h-1zM462 685h1v3h-1zM463 563h1v122h-1zM464 563h1v1h-1zM465 563h1v1h-1zM466 563h1v1h-1zM467 563h1v1h-1zM468 563h1v1h-1zM469 563h1v1h-1zM470 563h1v1h-1zM471 563h1v1h-1zM472 563h1v1h-1zM473 563h1v1h-1zM474 563h1v1h-1zM475 563h1v1h-1zM476 563h1v1h-1zM477 563h1v56h-1zM478 619h1v67h-1zM479 686h1v3h-1zM480 689h1v2h-1zM481 691h1v1h-1zM482 692h1v1h-1zM483 692h1v1h-1zM484 692h1v1h-1zM485 692h1v1h-1zM486 692h1v1h-1zM487 691h1v1h-1zM488 689h1v2h-1zM489 686h1v3h-1zM490 597h1v89h-1zM491 563h1v34h-1zM492 563h1v1h-1zM493 563h1v1h-1zM494 563h1v1h-1zM495 563h1v1h-1zM496 563h1v1h-1zM497 563h1v1h-1zM498 563h1v1h-1zM499 563h1v1h-1zM500 563h1v1h-1zM501 563h1v1h-1zM502 563h1v1h-1zM503 563h1v1h-1zM504 563h1v1h-1zM505 564h1v121h-1zM506 685h1v3h-1zM507 688h1v2h-1zM508 690h1v2h-1zM509 692h1v1h-1zM510 692h1v1h-1zM511 692h1v1h-1zM512 692h1v1h-1zM513 692h1v1h-1zM514 691h1v1h-1zM515 690h1v1h-1zM516 687h1v3h-1zM517 684h1v3h-1zM518 563h1v121h-1zM519 563h1v1h-1zM520 563h1v1h-1zM521 563h1v1h-1zM522 563h1v1h-1zM523 563h1v1h-1zM524 563h1v1h-1zM525 563h1v1h-1zM526 563h1v1h-1zM527 563h1v1h-1zM528 563h1v1h-1zM529 563h1v1h-1zM530 563h1v1h-1zM531 563h1v1h-1zM532 563h1v94h-1zM533 657h1v30h-1zM534 687h1v3h-1zM535 690h1v1h-1zM536 691h1v1h-1zM537 692h1v1h-1zM538 692h1v1h-1zM539 692h1v1h-1zM540 692h1v1h-1zM541 692h1v1h-1zM542 690h1v2h-1zM543 688h1v2h-1zM544 685h1v3h-1zM545 563h1v122h-1zM546 563h1v1h-1zM547 563h1v1h-1zM548 563h1v1h-1zM549 563h1v1h-1zM550 563h1v1h-1zM551 563h1v1h-1zM552 563h1v1h-1zM553 563h1v1h-1zM554 563h1v1h-1zM555 563h1v1h-1zM556 563h1v1h-1zM557 563h1v1h-1zM558 563h1v1h-1zM559 563h1v37h-1zM560 600h1v86h-1zM561 686h1v3h-1zM562 689h1v2h-1zM563 691h1v1h-1zM564 692h1v1h-1zM565 692h1v1h-1zM566 692h1v1h-1zM567 692h1v1h-1zM568 692h1v1h-1zM569 691h1v1h-1zM570 689h1v2h-1zM571 687h1v2h-1zM572 634h1v53h-1zM573 563h1v71h-1zM574 563h1v1h-1zM575 563h1v1h-1zM576 563h1v1h-1zM577 563h1v1h-1zM578 563h1v1h-1zM579 563h1v1h-1zM580 563h1v1h-1zM581 563h1v1h-1zM582 563h1v1h-1zM583 563h1v1h-1zM584 563h1v1h-1zM585 563h1v1h-1zM586 563h1v1h-1zM587 563h1v121h-1zM588 684h1v4h-1zM589 688h1v2h-1zM590 690h1v2h-1zM591 692h1v1h-1zM592 692h1v1h-1zM593 692h1v1h-1zM594 692h1v1h-1zM595 692h1v1h-1zM596 691h1v1h-1zM597 690h1v1h-1zM598 688h1v2h-1zM599 685h1v3h-1zM600 563h1v122h-1zM601 563h1v1h-1zM602 563h1v1h-1zM603 563h1v1h-1zM604 563h1v1h-1zM605 563h1v1h-1zM606 563h1v1h-1zM607 563h1v1h-1zM608 563h1v1h-1zM609 563h1v1h-1zM610 563h1v1h-1zM611 563h1v1h-1zM612 563h1v1h-1zM613 563h1v1h-1zM614 563h1v75h-1zM615 638h1v48h-1zM616 686h1v3h-1zM617 689h1v2h-1zM618 691h1v1h-1zM619 692h1v1h-1zM620 692h1v1h-1zM621 692h1v1h-1zM622 692h1v1h-1zM623 692h1v1h-1zM624 690h1v2h-1zM625 688h1v2h-1zM626 686h1v2h-1zM627 563h1v123h-1zM628 563h1v1h-1zM629 563h1v1h-1zM630 563h1v1h-1zM631 563h1v1h-1zM632 563h1v1h-1zM633 563h1v1h-1zM634 563h1v1h-1zM635 563h1v1h-1zM636 563h1v1h-1zM637 563h1v1h-1zM638 563h1v1h-1zM639 563h1v1h-1zM640 563h1v1h-1zM641 563h1v18h-1zM642 581h1v104h-1zM643 685h1v3h-1zM644 688h1v3h-1zM645 691h1v1h-1zM646 692h1v1h-1zM647 692h1v1h-1zM648 692h1v1h-1zM649 692h1v1h-1zM650 692h1v1h-1zM651 691h1v1h-1zM652 689h1v2h-1zM653 687h1v2h-1zM654 672h1v15h-1zM655 563h1v109h-1zM656 563h1v1h-1zM657 563h1v1h-1zM658 563h1v1h-1zM659 563h1v1h-1zM660 563h1v1h-1zM661 563h1v1h-1zM662 563h1v1h-1zM663 563h1v1h-1zM664 563h1v1h-1zM665 563h1v1h-1zM666 563h1v1h-1zM667 563h1v1h-1zM668 563h1v1h-1zM669 563h1v112h-1zM670 675h1v12h-1zM671 687h1v3h-1zM672 690h1v2h-1zM673 692h1v1h-1zM674 692h1v1h-1zM675 692h1v1h-1zM676 692h1v1h-1zM677 692h1v1h-1zM678 691h1v1h-1zM679 690h1v1h-1zM680 688h1v2h-1zM681 685h1v3h-1zM682 563h1v122h-1zM683 563h1v1h-1zM684 563h1v1h-1zM685 563h1v1h-1zM686 563h1v1h-1zM687 563h1v1h-1zM688 563h1v1h-1zM689 563h1v1h-1zM690 563h1v1h-1zM691 563h1v1h-1zM692 563h1v1h-1zM693 563h1v1h-1zM694 563h1v1h-1zM695 563h1v1h-1zM696 563h1v56h-1zM697 619h1v67h-1zM698 686h1v3h-1zM699 689h1v2h-1zM700 691h1v1h-1zM701 692h1v1h-1zM702 692h1v1h-1zM703 692h1v1h-1zM704 692h1v1h-1zM705 692h1v1h-1zM706 691h1v1h-1zM707 689h1v2h-1zM708 686h1v3h-1zM709 597h1v89h-1zM710 563h1v34h-1zM711 563h1v1h-1zM712 563h1v1h-1zM713 563h1v1h-1zM714 563h1v1h-1zM715 563h1v1h-1zM716 563h1v1h-1zM717 563h1v1h-1zM718 563h1v1h-1zM719 563h1v1h-1zM720 563h1v1h-1zM721 563h1v1h-1zM722 563h1v1h-1zM723 563h1v1h-1zM724 564h1v121h-1zM725 685h1v3h-1zM726 688h1v2h-1zM727 690h1v2h-1zM728 692h1v1h-1zM729 692h1v1h-1zM730 692h1v1h-1zM731 692h1v1h-1zM732 692h1v1h-1zM733 691h1v1h-1zM734 690h1v1h-1zM735 687h1v3h-1zM736 684h1v3h-1zM737 563h1v121h-1zM738 563h1v1h-1zM739 563h1v1h-1zM740 563h1v1h-1zM741 563h1v1h-1zM742 563h1v1h-1zM743 563h1v1h-1zM744 563h1v1h-1zM745 563h1v1h-1zM746 563h1v1h-1zM747 563h1v1h-1zM748 563h1v1h-1zM749 563h1v1h-1zM750 563h1v1h-1zM751 563h1v94h-1zM752 657h1v30h-1zM753 687h1v3h-1zM754 690h1v1h-1zM755 691h1v1h-1zM756 692h1v1h-1zM757 692h1v1h-1zM758 692h1v1h-1zM759 692h1v1h-1zM760 692h1v1h-1zM761 690h1v2h-1zM762 688h1v2h-1zM763 685h1v3h-1zM764 563h1v122h-1zM765 563h1v1h-1zM766 563h1v1h-1zM767 563h1v1h-1zM768 563h1v1h-1zM769 563h1v1h-1zM770 563h1v1h-1zM771 563h1v1h-1zM772 563h1v1h-1zM773 563h1v1h-1zM774 563h1v1h-1zM775 563h1v1h-1zM776 563h1v1h-1zM777 563h1v1h-1zM778 563h1v37h-1zM779 600h1v86h-1zM780 686h1v3h-1zM781 689h1v2h-1zM782 691h1v1h-1zM783 692h1v1h-1zM784 692h1v1h-1zM785 692h1v1h-1zM786 692h1v1h-1zM787 692h1v1h-1zM788 691h1v1h-1zM789 689h1v2h-1zM790 687h1v2h-1zM791 634h1v53h-1zM792 563h1v71h-1zM793 563h1v1h-1zM794 563h1v1h-1zM795 563h1v1h-1zM796 563h1v1h-1zM797 563h1v1h-1zM798 563h1v1h-1zM799 563h1v1h-1zM800 563h1v1h-1zM801 563h1v1h-1zM802 563h1v1h-1zM803 563h1v1h-1zM804 563h1v1h-1zM805 563h1v1h-1zM806 563h1v121h-1zM807 684h1v4h-1zM808 688h1v2h-1zM809 690h1v2h-1zM810 692h1v1h-1zM811 692h1v1h-1zM812 692h1v1h-1zM813 692h1v1h-1zM814 692h1v1h-1zM815 691h1v1h-1zM816 690h1v1h-1zM817 688h1v2h-1zM818 685h1v3h-1zM819 563h1v122h-1zM820 563h1v1h-1zM821 563h1v1h-1zM822 563h1v1h-1zM823 563h1v1h-1zM824 563h1v1h-1zM825 563h1v1h-1zM826 563h1v1h-1zM827 563h1v1h-1zM828 563h1v1h-1zM829 563h1v1h-1zM830 563h1v1h-1zM831 563h1v1h-1zM832 563h1v1h-1zM833 563h1v75h-1zM834 638h1v48h-1zM835 686h1v3h-1zM836 689h1v2h-1zM837 691h1v1h-1zM838 692h1v1h-1zM839 692h1v1h-1zM840 692h1v1h-1zM841 692h1v1h-1zM842 692h1v1h-1zM843 690h1v2h-1zM844 688h1v2h-1zM845 686h1v2h-1zM846 563h1v123h-1zM847 563h1v1h-1zM848 563h1v1h-1zM849 563h1v1h-1zM850 563h1v1h-1zM851 563h1v1h-1zM852 563h1v1h-1zM853 563h1v1h-1zM854 563h1v1h-1zM855 563h1v1h-1zM856 563h1v1h-1zM857 563h1v1h-1zM858 563h1v1h-1zM859 563h1v1h-1zM860 563h1v18h-1zM861 581h1v104h-1zM862 685h1v3h-1zM863 688h1v3h-1zM864 691h1v1h-1zM865 692h1v1h-1zM866 692h1v1h-1zM867 692h1v1h-1zM868 692h1v1h-1zM869 692h1v1h-1zM870 691h1v1h-1zM871 689h1v2h-1zM872 687h1v2h-1zM873 672h1v15h-1zM874 563h1v109h-1zM875 563h1v1h-1zM876 563h1v1h-1zM877 563h1v1h-1zM878 563h1v1h-1zM879 563h1v1h-1zM880 563h1v1h-1zM881 563h1v1h-1zM882 563h1v1h-1zM883 563h1v1h-1zM884 563h1v1h-1zM885 563h1v1h-1zM886 563h1v1h-1zM887 563h1v1h-1zM888 563h1v112h-1zM889 675h1v12h-1zM890 687h1v3h-1zM891 690h1v2h-1zM892 692h1v1h-1zM893 692h1v1h-1zM894 692h1v1h-1zM895 692h1v1h-1zM896 692h1v1h-1zM897 691h1v1h-1zM898 690h1v1h-1zM899 688h1v2h-1zM900 685h1v3h-1zM901 563h1v122h-1zM902 563h1v1h-1zM903 563h1v1h-1zM904 563h1v1h-1zM905 563h1v1h-1zM906 563h1v1h-1zM907 563h1v1h-1zM908 563h1v1h-1zM909 563h1v1h-1zM910 563h1v1h-1zM911 563h1v1h-1zM912 563h1v1h-1zM913 563h1v1h-1zM914 563h1v1h-1zM915 563h1v56h-1zM916 619h1v67h-1zM917 686h1v3h-1zM918 689h1v2h-1zM919 691h1v1h-1zM920 692h1v1h-1zM921 692h1v1h-1zM922 692h1v1h-1zM923 692h1v1h-1zM924 692h1v1h-1zM925 691h1v1h-1zM926 689h1v2h-1zM927 686h1v3h-1zM928 597h1v89h-1zM929 563h1v34h-1z" fill="#ffff00"/><path d="M53 732h1v1h-1zM54 731h1v1h-1zM55 730h1v1h-1zM56 729h1v1h-1zM57 729h1v1h-1zM58 728h1v1h-1zM59 728h1v1h-1zM60 728h1v1h-1zM61 728h1v1h-1zM62 729h1v1h-1zM63 729h1v2h-1zM64 731h1v1h-1zM65 732h1v27h-1zM66 759h1v36h-1zM67 795h1v36h-1zM68 831h1v26h-1zM69 857h1v2h-1zM70 859h1v1h-1zM71 860h1v1h-1zM72 861h1v1h-1zM73 861h1v1h-1zM74 861h1v1h-1zM75 861h1v1h-1zM76 861h1v1h-1zM77 860h1v1h-1zM78 859h1v1h-1zM79 858h1v1h-1zM80 773h1v85h-1zM81 732h1v41h-1zM82 731h1v1h-1zM83 730h1v1h-1zM84 729h1v1h-1zM85 728h1v1h-1zM86 728h1v1h-1zM87 728h1v1h-1zM88 728h1v1h-1zM89 728h1v1h-1zM90 729h1v1h-1zM91 730h1v2h-1zM92 732h1v13h-1zM93 745h1v36h-1zM94 781h1v37h-1zM95 818h1v36h-1zM96 854h1v5h-1zM97 859h1v1h-1zM98 860h1v1h-1zM99 861h1v1h-1zM100 861h1v1h-1zM101 861h1v1h-1zM102 861h1v1h-1zM103 861h1v1h-1zM104 860h1v1h-1zM105 859h1v1h-1zM106 858h1v1h-1zM107 824h1v34h-1zM108 733h1v91h-1zM109 731h1v2h-1zM110 730h1v1h-1zM111 729h1v1h-1zM112 728h1v1h-1zM113 728h1v1h-1zM114 728h1v1h-1zM115 728h1v1h-1zM116 728h1v1h-1zM117 729h1v1h-1zM118 730h1v1h-1zM119 731h1v2h-1zM120 733h1v35h-1zM121 768h1v36h-1zM122 804h1v36h-1zM123 840h1v18h-1zM124 858h1v1h-1zM125 859h1v2h-1zM126 860h1v1h-1zM127 861h1v1h-1zM128 861h1v1h-1zM129 861h1v1h-1zM130 861h1v1h-1zM131 860h1v1h-1zM132 860h1v1h-1zM133 859h1v1h-1zM134 857h1v2h-1zM135 738h1v119h-1zM136 732h1v6h-1zM137 730h1v2h-1zM138 729h1v1h-1zM139 729h1v1h-1zM140 728h1v1h-1zM141 728h1v1h-1zM142 728h1v1h-1zM143 728h1v1h-1zM144 728h1v1h-1zM145 729h1v1h-1zM146 730h1v2h-1zM147 732h1v22h-1zM148 754h1v36h-1zM149 790h1v37h-1zM150 827h1v30h-1zM151 857h1v2h-1zM152 859h1v1h-1zM153 860h1v1h-1zM154 861h1v1h-1zM155 861h1v1h-1zM156 861h1v1h-1zM157 861h1v1h-1zM158 861h1v1h-1zM159 860h1v1h-1zM160 859h1v1h-1zM161 858h1v1h-1zM162 790h1v68h-1zM163 732h1v58h-1zM164 731h1v1h-1zM165 730h1v1h-1zM166 729h1v1h-1zM167 728h1v1h-1zM168 728h1v1h-1zM169 728h1v1h-1zM170 728h1v1h-1zM171 728h1v1h-1zM172 729h1v1h-1zM173 730h1v1h-1zM174 731h1v9h-1zM175 740h1v37h-1zM176 777h1v36h-1zM177 813h1v37h-1zM178 850h1v8h-1zM179 858h1v2h-1zM180 860h1v1h-1zM181 861h1v1h-1zM182 861h1v1h-1zM183 861h1v1h-1zM184 861h1v1h-1zM185 861h1v1h-1zM186 860h1v1h-1zM187 860h1v1h-1zM188 858h1v2h-1zM189 841h1v17h-1zM190 733h1v108h-1zM191 731h1v2h-1zM192 730h1v1h-1zM193 729h1v1h-1zM194 729h1v1h-1zM195 728h1v1h-1zM196 728h1v1h-1zM197 728h1v1h-1zM198 728h1v1h-1zM199 729h1v1h-1zM200 730h1v1h-1zM201 731h1v2h-1zM202 733h1v30h-1zM203 763h1v37h-1zM204 800h1v36h-1zM205 836h1v22h-1zM206 858h1v1h-1zM207 859h1v1h-1zM208 860h1v1h-1zM209 861h1v1h-1zM210 861h1v1h-1zM211 861h1v1h-1zM212 861h1v1h-1zM213 861h1v1h-1zM214 860h1v1h-1zM215 859h1v1h-1zM216 857h1v2h-1zM217 756h1v101h-1zM218 732h1v24h-1zM219 731h1v1h-1zM220 730h1v1h-1zM221 729h1v1h-1zM222 728h1v1h-1zM223 728h1v1h-1zM224 728h1v1h-1zM225 728h1v1h-1zM226 728h1v1h-1zM227 729h1v1h-1zM228 730h1v2h-1zM229 732h1v18h-1zM230 750h1v36h-1zM231 786h1v36h-1zM232 822h1v35h-1zM233 857h1v2h-1zM234 859h1v1h-1zM235 860h1v1h-1zM236 861h1v1h-1zM237 861h1v1h-1zM238 861h1v1h-1zM239 861h1v1h-1zM240 861h1v1h-1zM241 860h1v1h-1zM242 859h1v1h-1zM243 858h1v1h-1zM244 807h1v51h-1zM245 732h1v75h-1zM246 731h1v1h-1zM247 730h1v1h-1zM248 729h1v1h-1zM249 728h1v1h-1zM250 728h1v1h-1zM251 728h1v1h-1zM252 728h1v1h-1zM253 728h1v1h-1zM254 729h1v1h-1zM255 730h1v1h-1zM256 731h1v5h-1zM257 736h1v36h-1zM258 772h1v37h-1zM259 809h1v36h-1zM260 845h1v13h-1zM261 858h1v2h-1zM262 860h1v1h-1zM263 860h1v1h-1zM264 861h1v1h-1zM265 861h1v1h-1zM266 861h1v1h-1zM267 861h1v1h-1zM268 860h1v1h-1zM269 860h1v1h-1zM270 859h1v1h-1zM271 857h1v2h-1zM272 733h1v124h-1zM273 731h1v2h-1zM274 730h1v1h-1zM275 729h1v1h-1zM276 729h1v1h-1zM277 728h1v1h-1zM278 728h1v1h-1zM279 728h1v1h-1zM280 728h1v1h-1zM281 729h1v1h-1zM282 729h1v2h-1zM283 731h1v1h-1zM284 732h1v27h-1zM285 759h1v36h-1zM286 795h1v36h-1zM287 831h1v26h-1zM288 857h1v2h-1zM289 859h1v1h-1zM290 860h1v1h-1zM291 861h1v1h-1zM292 861h1v1h-1zM293 861h1v1h-1zM294 861h1v1h-1zM295 861h1v1h-1zM296 860h1v1h-1zM297 859h1v1h-1zM298 858h1v1h-1zM299 773h1v85h-1zM300 732h1v41h-1zM301 731h1v1h-1zM302 730h1v1h-1zM303 729h1v1h-1zM304 728h1v1h-1zM305 728h1v1h-1zM306 728h1v1h-1zM307 728h1v1h-1zM308 728h1v1h-1zM309 729h1v1h-1zM310 730h1v2h-1zM311 732h1v13h-1zM312 745h1v36h-1zM313 781h1v37h-1zM314 818h1v36h-1zM315 854h1v5h-1zM316 859h1v1h-1zM317 860h1v1h-1zM318 861h1v1h-1zM319 861h1v1h-1zM320 861h1v1h-1zM321 861h1v1h-1zM322 861h1v1h-1zM323 860h1v1h-1zM324 859h1v1h-1zM325 858h1v1h-1zM326 824h1v34h-1zM327 733h1v91h-1zM328 731h1v2h-1zM329 730h1v1h-1zM330 729h1v1h-1zM331 728h1v1h-1zM332 728h1v1h-1zM333 728h1v1h-1zM334 728h1v1h-1zM335 728h1v1h-1zM336 729h1v1h-1zM337 730h1v1h-1zM338 731h1v2h-1zM339 733h1v35h-1zM340 768h1v36h-1zM341 804h1v36h-1zM342 840h1v18h-1zM343 858h1v1h-1zM344 859h1v2h-1zM345 860h1v1h-1zM346 861h1v1h-1zM347 861h1v1h-1zM348 861h1v1h-1zM349 861h1v1h-1zM350 860h1v1h-1zM351 860h1v1h-1zM352 859h1v1h-1zM353 857h1v2h-1zM354 738h1v119h-1zM355 732h1v6h-1zM356 730h1v2h-1zM357 729h1v1h-1zM358 729h1v1h-1zM359 728h1v1h-1zM360 728h1v1h-1zM361 728h1v1h-1zM362 728h1v1h-1zM363 728h1v1h-1zM364 729h1v1h-1zM365 730h1v2h-1zM366 732h1v22h-1zM367 754h1v36h-1zM368 790h1v37h-1zM369 827h1v30h-1zM370 857h1v2h-1zM371 859h1v1h-1zM372 860h1v1h-1zM373 861h1v1h-1zM374 861h1v1h-1zM375 861h1v1h-1zM376 861h1v1h-1zM377 861h1v1h-1zM378 860h1v1h-1zM379 859h1v1h-1zM380 858h1v1h-1zM381 790h1v68h-1zM382 732h1v58h-1zM383 731h1v1h-1zM384 730h1v1h-1zM385 729h1v1h-1zM386 728h1v1h-1zM387 728h1v1h-1zM388 728h1v1h-1zM389 728h1v1h-1zM390 728h1v1h-1zM391 729h1v1h-1zM392 730h1v1h-1zM393 731h1v9h-1zM394 740h1v37h-1zM395 777h1v36h-1zM396 813h1v37h-1zM397 850h1v8h-1zM398 858h1v2h-1zM399 860h1v1h-1zM400 861h1v1h-1zM401 861h1v1h-1zM402 861h1v1h-1zM403 861h1v1h-1zM404 861h1v1h-1zM405 860h1v1h-1zM406 860h1v1h-1zM407 858h1v2h-1zM408 841h1v17h-1zM409 733h1v108h-1zM410 731h1v2h-1zM411 730h1v1h-1zM412 729h1v1h-1zM413 729h1v1h-1zM414 728h1v1h-1zM415 728h1v1h-1zM416 728h1v1h-1zM417 728h1v1h-1zM418 729h1v1h-1zM419 730h1v1h-1zM420 731h1v2h-1zM421 733h1v30h-1zM422 763h1v37h-1zM423 800h1v36h-1zM424 836h1v22h-1zM425 858h1v1h-1zM426 859h1v1h-1zM427 860h1v1h-1zM428 861h1v1h-1zM429 861h1v1h-1zM430 861h1v1h-1zM431 861h1v1h-1zM432 861h1v1h-1zM433 860h1v1h-1zM434 859h1v1h-1zM435 857h1v2h-1zM436 756h1v101h-1zM437 732h1v24h-1zM438 731h1v1h-1zM439 730h1v1h-1zM440 729h1v1h-1zM441 728h1v1h-1zM442 728h1v1h-1zM443 728h1v1h-1zM444 728h1v1h-1zM445 728h1v1h-1zM446 729h1v1h-1zM447 730h1v2h-1zM448 732h1v18h-1zM449 750h1v36h-1zM450 786h1v36h-1zM451 822h1v35h-1zM452 857h1v2h-1zM453 859h1v1h-1zM454 860h1v1h-1zM455 861h1v1h-1zM456 861h1v1h-1zM457 861h1v1h-1zM458 861h1v1h-1zM459 861h1v1h-1zM460 860h1v1h-1zM461 859h1v1h-1zM462 858h1v1h-1zM463 807h1v51h-1zM464 732h1v75h-1zM465 731h1v1h-1zM466 730h1v1h-1zM467 729h1v1h-1zM468 728h1v1h-1zM469 728h1v1h-1zM470 728h1v1h-1zM471 728h1v1h-1zM472 728h1v1h-1zM473 729h1v1h-1zM474 730h1v1h-1zM475 731h1v5h-1zM476 736h1v36h-1zM477 772h1v37h-1zM478 809h1v36h-1zM479 845h1v13h-1zM480 858h1v2h-1zM481 860h1v1h-1zM482 860h1v1h-1zM483 861h1v1h-1zM484 861h1v1h-1zM485 861h1v1h-1zM486 861h1v1h-1zM487 860h1v1h-1zM488 860h1v1h-1zM489 859h1v1h-1zM490 857h1v2h-1zM491 733h1v124h-1zM492 731h1v2h-1zM493 730h1v1h-1zM494 729h1v1h-1zM495 729h1v1h-1zM496 728h1v1h-1zM497 728h1v1h-1zM498 728h1v1h-1zM499 728h1v1h-1zM500 729h1v1h-1zM501 729h1v2h-1zM502 731h1v1h-1zM503 732h1v27h-1zM504 759h1v36h-1zM505 795h1v36h-1zM506 831h1v26h-1zM507 857h1v2h-1zM508 859h1v1h-1zM509 860h1v1h-1zM510 861h1v1h-1zM511 861h1v1h-1zM512 861h1v1h-1zM513 861h1v1h-1zM514 861h1v1h-1zM515 860h1v1h-1zM516 859h1v1h-1zM517 858h1v1h-1zM518 773h1v85h-1zM519 732h1v41h-1zM520 731h1v1h-1zM521 730h1v1h-1zM522 729h1v1h-1zM523 728h1v1h-1zM524 728h1v1h-1zM525 728h1v1h-1zM526 728h1v1h-1zM527 728h1v1h-1zM528 729h1v1h-1zM529 730h1v2h-1zM530 732h1v13h-1zM531 745h1v36h-1zM532 781h1v37h-1zM533 818h1v36h-1zM534 854h1v5h-1zM535 859h1v1h-1zM536 860h1v1h-1zM537 861h1v1h-1zM538 861h1v1h-1zM539 861h1v1h-1zM540 861h1v1h-1zM541 861h1v1h-1zM542 860h1v1h-1zM543 859h1v1h-1zM544 858h1v1h-1zM545 824h1v34h-1zM546 733h1v91h-1zM547 731h1v2h-1zM548 730h1v1h-1zM549 729h1v1h-1zM550 728h1v1h-1zM551 728h1v1h-1zM552 728h1v1h-1zM553 728h1v1h-1zM554 728h1v1h-1zM555 729h1v1h-1zM556 730h1v1h-1zM557 731h1v2h-1zM558 733h1v35h-1zM559 768h1v36h-1zM560 804h1v36h-1zM561 840h1v18h-1zM562 858h1v1h-1zM563 859h1v2h-1zM564 860h1v1h-1zM565 861h1v1h-1zM566 861h1v1h-1zM567 861h1v1h-1zM568 861h1v1h-1zM569 860h1v1h-1zM570 860h1v1h-1zM571 859h1v1h-1zM572 857h1v2h-1zM573 738h1v119h-1zM574 732h1v6h-1zM575 730h1v2h-1zM576 729h1v1h-1zM577 729h1v1h-1zM578 728h1v1h-1zM579 728h1v1h-1zM580 728h1v1h-1zM581 728h1v1h-1zM582 728h1v1h-1zM583 729h1v1h-1zM584 730h1v2h-1zM585 732h1v22h-1zM586 754h1v36h-1zM587 790h1v37h-1zM588 827h1v30h-1zM589 857h1v2h-1zM590 859h1v1h-1zM591 860h1v1h-1zM592 861h1v1h-1zM593 861h1v1h-1zM594 861h1v1h-1zM595 861h1v1h-1zM596 861h1v1h-1zM597 860h1v1h-1zM598 859h1v1h-1zM599 858h1v1h-1zM600 790h1v68h-1zM601 732h1v58h-1zM602 731h1v1h-1zM603 730h1v1h-1zM604 729h1v1h-1zM605 728h1v1h-1zM606 728h1v1h-1zM607 728h1v1h-1zM608 728h1v1h-1zM609 728h1v1h-1zM610 729h1v1h-1zM611 730h1v1h-1zM612 731h1v9h-1zM613 740h1v37h-1zM614 777h1v36h-1zM615 813h1v37h-1zM616 850h1v8h-1zM617 858h1v2h-1zM618 860h1v1h-1zM619 861h1v1h-1zM620 861h1v1h-1zM621 861h1v1h-1zM622 861h1v1h-1zM623 861h1v1h-1zM624 860h1v1h-1zM625 860h1v1h-1zM626 858h1v2h-1zM627 841h1v17h-1zM628 733h1v108h-1zM629 731h1v2h-1zM630 730h1v1h-1zM631 729h1v1h-1zM632 729h1v1h-1zM633 728h1v1h-1zM634 728h1v1h-1zM635 728h1v1h-1zM636 728h1v1h-1zM637 729h1v1h-1zM638 730h1v1h-1zM639 731h1v2h-1zM640 733h1v30h-1zM641 763h1v37h-1zM642 800h1v36h-1zM643 836h1v22h-1zM644 858h1v1h-1zM645 859h1v1h-1zM646 860h1v1h-1zM647 861h1v1h-1zM648 861h1v1h-1zM649 861h1v1h-1zM650 861h1v1h-1zM651 861h1v1h-1zM652 860h1v1h-1zM653 859h1v1h-1zM654 857h1v2h-1zM655 756h1v101h-1zM656 732h1v24h-1zM657 731h1v1h-1zM658 730h1v1h-1zM659 729h1v1h-1zM660 728h1v1h-1zM661 728h1v1h-1zM662 728h1v1h-1zM663 728h1v1h-1zM664 728h1v1h-1zM665 729h1v1h-1zM666 730h1v2h-1zM667 732h1v18h-1zM668 750h1v36h-1zM669 786h1v36h-1zM670 822h1v35h-1zM671 857h1v2h-1zM672 859h1v1h-1zM673 860h1v1h-1zM674 861h1v1h-1zM675 861h1v1h-1zM676 861h1v1h-1zM677 861h1v1h-1zM678 861h1v1h-1zM679 860h1v1h-1zM680 859h1v1h-1zM681 858h1v1h-1zM682 807h1v51h-1zM683 732h1v75h-1zM684 731h1v1h-1zM685 730h1v1h-1zM686 729h1v1h-1zM687 728h1v1h-1zM688 728h1v1h-1zM689 728h1v1h-1zM690 728h1v1h-1zM691 728h1v1h-1zM692 729h1v1h-1zM693 730h1v1h-1zM694 731h1v5h-1zM695 736h1v36h-1zM696 772h1v37h-1zM697 809h1v36h-1zM698 845h1v13h-1zM699 858h1v2h-1zM700 860h1v1h-1zM701 860h1v1h-1zM702 861h1v1h-1zM703 861h1v1h-1zM704 861h1v1h-1zM705 861h1v1h-1zM706 860h1v1h-1zM707 860h1v1h-1zM708 859h1v1h-1zM709 857h1v2h-1zM710 733h1v124h-1zM711 731h1v2h-1zM712 730h1v1h-1zM713 729h1v1h-1zM714 729h1v1h-1zM715 728h1v1h-1zM716 728h1v1h-1zM717 728h1v1h-1zM718 728h1v1h-1zM719 729h1v1h-1zM720 729h1v2h-1zM721 731h1v1h-1zM722 732h1v27h-1zM723 759h1v36h-1zM724 795h1v36h-1zM725 831h1v26h-1zM726 857h1v2h-1zM727 859h1v1h-1zM728 860h1v1h-1zM729 861h1v1h-1zM730 861h1v1h-1zM731 861h1v1h-1zM732 861h1v1h-1zM733 861h1v1h-1zM734 860h1v1h-1zM735 859h1v1h-1zM736 858h1v1h-1zM737 773h1v85h-1zM738 732h1v41h-1zM739 731h1v1h-1zM740 730h1v1h-1zM741 729h1v1h-1zM742 728h1v1h-1zM743 728h1v1h-1zM744 728h1v1h-1zM745 728h1v1h-1zM746 728h1v1h-1zM747 729h1v1h-1zM748 730h1v2h-1zM749 732h1v13h-1zM750 745h1v36h-1zM751 781h1v37h-1zM752 818h1v36h-1zM753 854h1v5h-1zM754 859h1v1h-1zM755 860h1v1h-1zM756 861h1v1h-1zM757 861h1v1h-1zM758 861h1v1h-1zM759 861h1v1h-1zM760 861h1v1h-1zM761 860h1v1h-1zM762 859h1v1h-1zM763 858h1v1h-1zM764 824h1v34h-1zM765 733h1v91h-1zM766 731h1v2h-1zM767 730h1v1h-1zM768 729h1v1h-1zM769 728h1v1h-1zM770 728h1v1h-1zM771 728h1v1h-1zM772 728h1v1h-1zM773 728h1v1h-1zM774 729h1v1h-1zM775 730h1v1h-1zM776 731h1v2h-1zM777 733h1v35h-1zM778 768h1v36h-1zM779 804h1v36h-1zM780 840h1v18h-1zM781 858h1v1h-1zM782 859h1v2h-1zM783 860h1v1h-1zM784 861h1v1h-1zM785 861h1v1h-1zM786 861h1v1h-1zM787 861h1v1h-1zM788 860h1v1h-1zM789 860h1v1h-1zM790 859h1v1h-1zM791 857h1v2h-1zM792 738h1v119h-1zM793 732h1v6h-1zM794 730h1v2h-1zM795 729h1v1h-1zM796 729h1v1h-1zM797 728h1v1h-1zM798 728h1v1h-1zM799 728h1v1h-1zM800 728h1v1h-1zM801 728h1v1h-1zM802 729h1v1h-1zM803 730h1v2h-1zM804 732h1v22h-1zM805 754h1v36h-1zM806 790h1v37h-1zM807 827h1v30h-1zM808 857h1v2h-1zM809 859h1v1h-1zM810 860h1v1h-1zM811 861h1v1h-1zM812 861h1v1h-1zM813 861h1v1h-1zM814 861h1v1h-1zM815 861h1v1h-1zM816 860h1v1h-1zM817 859h1v1h-1zM818 858h1v1h-1zM819 790h1v68h-1zM820 732h1v58h-1zM821 731h1v1h-1zM822 730h1v1h-1zM823 729h1v1h-1zM824 728h1v1h-1zM825 728h1v1h-1zM826 728h1v1h-1zM827 728h1v1h-1zM828 728h1v1h-1zM829 729h1v1h-1zM830 730h1v1h-1zM831 731h1v9h-1zM832 740h1v37h-1zM833 777h1v36h-1zM834 813h1v37h-1zM835 850h1v8h-1zM836 858h1v2h-1zM837 860h1v1h-1zM838 861h1v1h-1zM839 861h1v1h-1zM840 861h1v1h-1zM841 861h1v1h-1zM842 861h1v1h-1zM843 860h1v1h-1zM844 860h1v1h-1zM845 858h1v2h-1zM846 841h1v17h-1zM847 733h1v108h-1zM848 731h1v2h-1zM849 730h1v1h-1zM850 729h1v1h-1zM851 729h1v1h-1zM852 728h1v1h-1zM853 728h1v1h-1zM854 728h1v1h-1zM855 728h1v1h-1zM856 729h1v1h-1zM857 730h1v1h-1zM858 731h1v2h-1zM859 733h1v30h-1zM860 763h1v37h-1zM861 800h1v36h-1zM862 836h1v22h-1zM863 858h1v1h-1zM864 859h1v1h-1zM865 860h1v1h-1zM866 861h1v1h-1zM867 861h1v1h-1zM868 861h1v1h-1zM869 861h1v1h-1zM870 861h1v1h-1zM871 860h1v1h-1zM872 859h1v1h-1zM873 857h1v2h-1zM874 756h1v101h-1zM875 732h1v24h-1zM876 731h1v1h-1zM877 730h1v1h-1zM878 729h1v1h-1zM879 728h1v1h-1zM880 728h1v1h-1zM881 728h1v1h-1zM882 728h1v1h-1zM883 728h1v1h-1zM884 729h1v1h-1zM885 730h1v2h-1zM886 732h1v18h-1zM887 750h1v36h-1zM888 786h1v36h-1zM889 822h1v35h-1zM890 857h1v2h-1zM891 859h1v1h-1zM892 860h1v1h-1zM893 861h1v1h-1zM894 861h1v1h-1zM895 861h1v1h-1zM896 861h1v1h-1zM897 861h1v1h-1zM898 860h1v1h-1zM899 859h1v1h-1zM900 858h1v1h-1zM901 807h1v51h-1zM902 732h1v75h-1zM903 731h1v1h-1zM904 730h1v1h-1zM905 729h1v1h-1zM906 728h1v1h-1zM907 728h1v1h-1zM908 728h1v1h-1zM909 728h1v1h-1zM910 728h1v1h-1zM911 729h1v1h-1zM912 730h1v1h-1zM913 731h1v5h-1zM914 736h1v36h-1zM915 772h1v37h-1zM916 809h1v36h-1zM917 845h1v13h-1zM918 858h1v2h-1zM919 860h1v1h-1zM920 860h1v1h-1zM921 861h1v1h-1zM922 861h1v1h-1zM923 861h1v1h-1zM924 861h1v1h-1zM925 860h1v1h-1zM926 860h1v1h-1zM927 859h1v1h-1zM928 857h1v2h-1zM929 796h1v61h-1z" fill="#4ee600"/></svg>
</body></html>
